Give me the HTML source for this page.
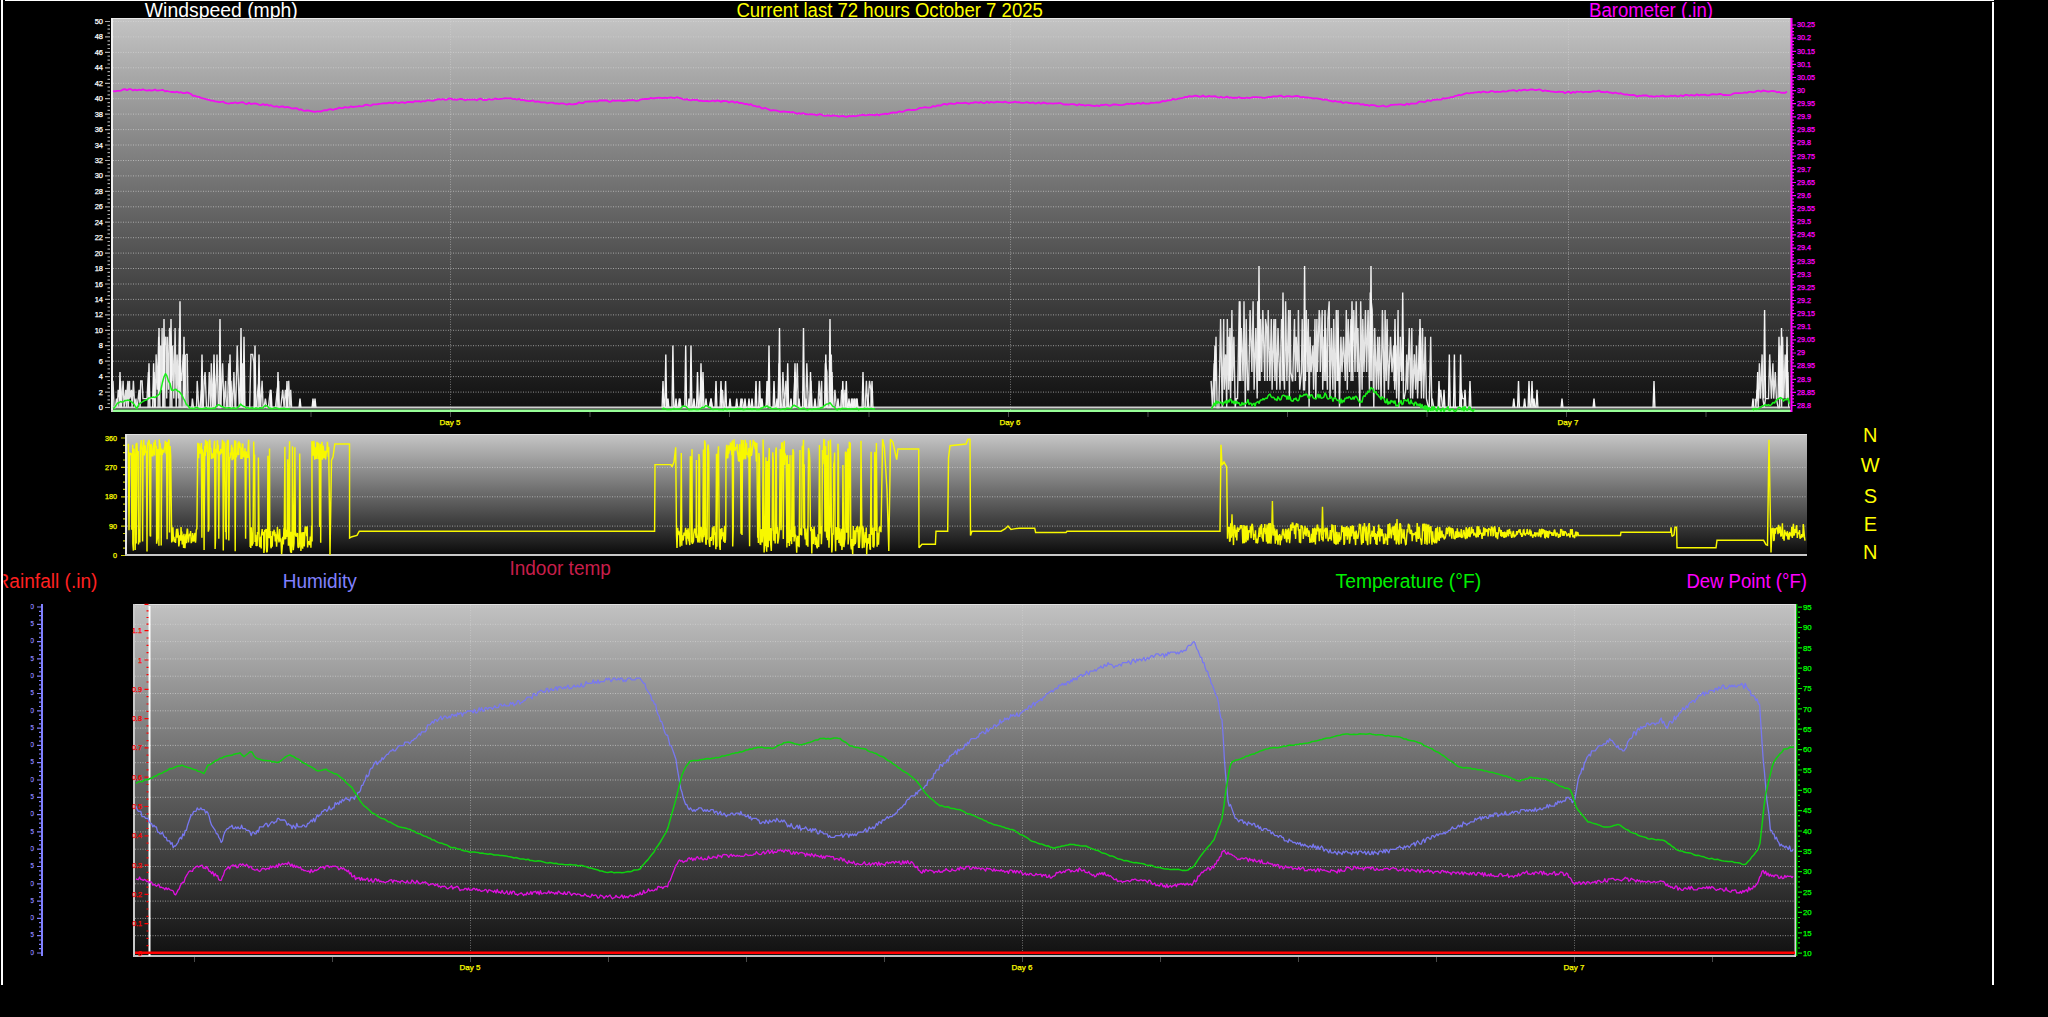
<!DOCTYPE html>
<html><head><meta charset="utf-8"><title>Weather 72h</title>
<style>html,body{margin:0;padding:0;background:#000;overflow:hidden;width:2048px;height:1017px}svg{display:block}text{font-family:"Liberation Sans",sans-serif}</style>
</head><body><svg width="2048" height="1017" viewBox="0 0 2048 1017" font-family='"Liberation Sans", sans-serif'><defs>
<linearGradient id="g1" x1="0" y1="0" x2="0" y2="1"><stop offset="0" stop-color="#c4c4c4"/><stop offset="0.5" stop-color="#636363"/><stop offset="1" stop-color="#0e0e0e"/></linearGradient>
<linearGradient id="g2" x1="0" y1="0" x2="0" y2="1"><stop offset="0" stop-color="#c6c6c6"/><stop offset="0.5" stop-color="#686868"/><stop offset="0.85" stop-color="#262626"/><stop offset="1" stop-color="#080808"/></linearGradient>
<linearGradient id="g3" x1="0" y1="0" x2="0" y2="1"><stop offset="0" stop-color="#c2c2c2"/><stop offset="0.5" stop-color="#636363"/><stop offset="1" stop-color="#101010"/></linearGradient>
</defs>
<rect x="111" y="18" width="1680" height="394" fill="url(#g1)"/>
<rect x="125" y="434" width="1682" height="122" fill="url(#g2)"/>
<rect x="133" y="604" width="1663" height="353" fill="url(#g3)"/>
<path d="M113 392.1H1791M113 376.6H1791M113 361.2H1791M113 345.7H1791M113 330.3H1791M113 314.9H1791M113 299.4H1791M113 284.0H1791M113 268.5H1791M113 253.1H1791M113 237.7H1791M113 222.2H1791M113 206.8H1791M113 191.3H1791M113 175.9H1791M113 160.5H1791M113 145.0H1791M113 129.6H1791M113 114.1H1791M113 98.7H1791M113 83.3H1791M113 67.8H1791M113 52.4H1791M113 36.9H1791M113 21.5H1791" stroke="#d8d8d8" stroke-opacity="0.62" stroke-width="1" stroke-dasharray="1 1.5" fill="none"/>
<path d="M450.5 19V412M1010.5 19V412M1568.5 19V412" stroke="#d8d8d8" stroke-opacity="0.45" stroke-width="1" stroke-dasharray="1 1.5" fill="none"/>
<path d="M127 526.1H1807M127 496.8H1807M127 467.4H1807" stroke="#d8d8d8" stroke-opacity="0.62" stroke-width="1" stroke-dasharray="1 1.5" fill="none"/>
<path d="M135 935.7H1796M135 918.4H1796M135 901.1H1796M135 883.8H1796M135 866.5H1796M135 849.2H1796M135 831.9H1796M135 814.6H1796M135 797.3H1796M135 780.0H1796M135 762.7H1796M135 745.4H1796M135 728.1H1796M135 710.8H1796M135 693.5H1796M135 676.2H1796M135 658.9H1796M135 641.6H1796M135 624.3H1796M135 607.0H1796" stroke="#d8d8d8" stroke-opacity="0.62" stroke-width="1" stroke-dasharray="1 1.5" fill="none"/>
<path d="M470.5 605V957M1022.5 605V957M1574.5 605V957" stroke="#d8d8d8" stroke-opacity="0.45" stroke-width="1" stroke-dasharray="1 1.5" fill="none"/>
<rect x="5" y="0" width="1989" height="1" fill="#fff"/>
<rect x="1" y="0" width="2" height="985" fill="#fff"/>
<rect x="1992" y="2" width="2" height="983" fill="#fff"/>
<rect x="111" y="18" width="1680" height="1" fill="#e8e8e8"/>
<rect x="111" y="18" width="2" height="394" fill="#f0f0f0"/>
<rect x="111" y="410" width="1680" height="2" fill="#d0d0d0"/>
<rect x="125" y="434" width="1682" height="1" fill="#e0e0e0"/>
<rect x="125" y="434" width="2" height="122" fill="#e8e8e8"/>
<rect x="125" y="554" width="1682" height="2" fill="#c8c8c8"/>
<rect x="133" y="604" width="1663" height="1" fill="#e0e0e0"/>
<rect x="133" y="604" width="2" height="353" fill="#c8c8c8"/>
<rect x="133" y="955" width="1663" height="2" fill="#c0c0c0"/>
<path d="M105.0 407.5H110.0M107.5 403.6H110.0M107.5 399.8H110.0M107.5 395.9H110.0M105.0 392.1H110.0M107.5 388.2H110.0M107.5 384.3H110.0M107.5 380.5H110.0M105.0 376.6H110.0M107.5 372.8H110.0M107.5 368.9H110.0M107.5 365.0H110.0M105.0 361.2H110.0M107.5 357.3H110.0M107.5 353.5H110.0M107.5 349.6H110.0M105.0 345.7H110.0M107.5 341.9H110.0M107.5 338.0H110.0M107.5 334.2H110.0M105.0 330.3H110.0M107.5 326.4H110.0M107.5 322.6H110.0M107.5 318.7H110.0M105.0 314.9H110.0M107.5 311.0H110.0M107.5 307.1H110.0M107.5 303.3H110.0M105.0 299.4H110.0M107.5 295.6H110.0M107.5 291.7H110.0M107.5 287.8H110.0M105.0 284.0H110.0M107.5 280.1H110.0M107.5 276.3H110.0M107.5 272.4H110.0M105.0 268.5H110.0M107.5 264.7H110.0M107.5 260.8H110.0M107.5 257.0H110.0M105.0 253.1H110.0M107.5 249.2H110.0M107.5 245.4H110.0M107.5 241.5H110.0M105.0 237.7H110.0M107.5 233.8H110.0M107.5 229.9H110.0M107.5 226.1H110.0M105.0 222.2H110.0M107.5 218.4H110.0M107.5 214.5H110.0M107.5 210.6H110.0M105.0 206.8H110.0M107.5 202.9H110.0M107.5 199.1H110.0M107.5 195.2H110.0M105.0 191.3H110.0M107.5 187.5H110.0M107.5 183.6H110.0M107.5 179.8H110.0M105.0 175.9H110.0M107.5 172.0H110.0M107.5 168.2H110.0M107.5 164.3H110.0M105.0 160.5H110.0M107.5 156.6H110.0M107.5 152.7H110.0M107.5 148.9H110.0M105.0 145.0H110.0M107.5 141.2H110.0M107.5 137.3H110.0M107.5 133.4H110.0M105.0 129.6H110.0M107.5 125.7H110.0M107.5 121.9H110.0M107.5 118.0H110.0M105.0 114.1H110.0M107.5 110.3H110.0M107.5 106.4H110.0M107.5 102.6H110.0M105.0 98.7H110.0M107.5 94.8H110.0M107.5 91.0H110.0M107.5 87.1H110.0M105.0 83.3H110.0M107.5 79.4H110.0M107.5 75.5H110.0M107.5 71.7H110.0M105.0 67.8H110.0M107.5 64.0H110.0M107.5 60.1H110.0M107.5 56.2H110.0M105.0 52.4H110.0M107.5 48.5H110.0M107.5 44.7H110.0M107.5 40.8H110.0M105.0 36.9H110.0M107.5 33.1H110.0M107.5 29.2H110.0M107.5 25.4H110.0M105.0 21.5H110.0" stroke="#a8a8a8" stroke-width="1.2" fill="none"/>
<text x="103.0" y="410.0" fill="#ffffff" stroke="#ffffff" stroke-width="0.25" font-size="7.5" text-anchor="end" >0</text>
<text x="103.0" y="394.6" fill="#ffffff" stroke="#ffffff" stroke-width="0.25" font-size="7.5" text-anchor="end" >2</text>
<text x="103.0" y="379.1" fill="#ffffff" stroke="#ffffff" stroke-width="0.25" font-size="7.5" text-anchor="end" >4</text>
<text x="103.0" y="363.7" fill="#ffffff" stroke="#ffffff" stroke-width="0.25" font-size="7.5" text-anchor="end" >6</text>
<text x="103.0" y="348.2" fill="#ffffff" stroke="#ffffff" stroke-width="0.25" font-size="7.5" text-anchor="end" >8</text>
<text x="103.0" y="332.8" fill="#ffffff" stroke="#ffffff" stroke-width="0.25" font-size="7.5" text-anchor="end" >10</text>
<text x="103.0" y="317.4" fill="#ffffff" stroke="#ffffff" stroke-width="0.25" font-size="7.5" text-anchor="end" >12</text>
<text x="103.0" y="301.9" fill="#ffffff" stroke="#ffffff" stroke-width="0.25" font-size="7.5" text-anchor="end" >14</text>
<text x="103.0" y="286.5" fill="#ffffff" stroke="#ffffff" stroke-width="0.25" font-size="7.5" text-anchor="end" >16</text>
<text x="103.0" y="271.0" fill="#ffffff" stroke="#ffffff" stroke-width="0.25" font-size="7.5" text-anchor="end" >18</text>
<text x="103.0" y="255.6" fill="#ffffff" stroke="#ffffff" stroke-width="0.25" font-size="7.5" text-anchor="end" >20</text>
<text x="103.0" y="240.2" fill="#ffffff" stroke="#ffffff" stroke-width="0.25" font-size="7.5" text-anchor="end" >22</text>
<text x="103.0" y="224.7" fill="#ffffff" stroke="#ffffff" stroke-width="0.25" font-size="7.5" text-anchor="end" >24</text>
<text x="103.0" y="209.3" fill="#ffffff" stroke="#ffffff" stroke-width="0.25" font-size="7.5" text-anchor="end" >26</text>
<text x="103.0" y="193.8" fill="#ffffff" stroke="#ffffff" stroke-width="0.25" font-size="7.5" text-anchor="end" >28</text>
<text x="103.0" y="178.4" fill="#ffffff" stroke="#ffffff" stroke-width="0.25" font-size="7.5" text-anchor="end" >30</text>
<text x="103.0" y="163.0" fill="#ffffff" stroke="#ffffff" stroke-width="0.25" font-size="7.5" text-anchor="end" >32</text>
<text x="103.0" y="147.5" fill="#ffffff" stroke="#ffffff" stroke-width="0.25" font-size="7.5" text-anchor="end" >34</text>
<text x="103.0" y="132.1" fill="#ffffff" stroke="#ffffff" stroke-width="0.25" font-size="7.5" text-anchor="end" >36</text>
<text x="103.0" y="116.6" fill="#ffffff" stroke="#ffffff" stroke-width="0.25" font-size="7.5" text-anchor="end" >38</text>
<text x="103.0" y="101.2" fill="#ffffff" stroke="#ffffff" stroke-width="0.25" font-size="7.5" text-anchor="end" >40</text>
<text x="103.0" y="85.8" fill="#ffffff" stroke="#ffffff" stroke-width="0.25" font-size="7.5" text-anchor="end" >42</text>
<text x="103.0" y="70.3" fill="#ffffff" stroke="#ffffff" stroke-width="0.25" font-size="7.5" text-anchor="end" >44</text>
<text x="103.0" y="54.9" fill="#ffffff" stroke="#ffffff" stroke-width="0.25" font-size="7.5" text-anchor="end" >46</text>
<text x="103.0" y="39.4" fill="#ffffff" stroke="#ffffff" stroke-width="0.25" font-size="7.5" text-anchor="end" >48</text>
<text x="103.0" y="24.0" fill="#ffffff" stroke="#ffffff" stroke-width="0.25" font-size="7.5" text-anchor="end" >50</text>
<rect x="1790.5" y="18" width="2" height="394" fill="#ff00ff"/>
<path d="M1792.0 405.5H1796.0M1792.0 402.2H1794.0M1792.0 398.9H1794.0M1792.0 395.7H1794.0M1792.0 392.4H1796.0M1792.0 389.1H1794.0M1792.0 385.8H1794.0M1792.0 382.5H1794.0M1792.0 379.3H1796.0M1792.0 376.0H1794.0M1792.0 372.7H1794.0M1792.0 369.4H1794.0M1792.0 366.1H1796.0M1792.0 362.9H1794.0M1792.0 359.6H1794.0M1792.0 356.3H1794.0M1792.0 353.0H1796.0M1792.0 349.7H1794.0M1792.0 346.5H1794.0M1792.0 343.2H1794.0M1792.0 339.9H1796.0M1792.0 336.6H1794.0M1792.0 333.3H1794.0M1792.0 330.1H1794.0M1792.0 326.8H1796.0M1792.0 323.5H1794.0M1792.0 320.2H1794.0M1792.0 316.9H1794.0M1792.0 313.7H1796.0M1792.0 310.4H1794.0M1792.0 307.1H1794.0M1792.0 303.8H1794.0M1792.0 300.5H1796.0M1792.0 297.3H1794.0M1792.0 294.0H1794.0M1792.0 290.7H1794.0M1792.0 287.4H1796.0M1792.0 284.1H1794.0M1792.0 280.9H1794.0M1792.0 277.6H1794.0M1792.0 274.3H1796.0M1792.0 271.0H1794.0M1792.0 267.7H1794.0M1792.0 264.5H1794.0M1792.0 261.2H1796.0M1792.0 257.9H1794.0M1792.0 254.6H1794.0M1792.0 251.3H1794.0M1792.0 248.1H1796.0M1792.0 244.8H1794.0M1792.0 241.5H1794.0M1792.0 238.2H1794.0M1792.0 234.9H1796.0M1792.0 231.7H1794.0M1792.0 228.4H1794.0M1792.0 225.1H1794.0M1792.0 221.8H1796.0M1792.0 218.5H1794.0M1792.0 215.3H1794.0M1792.0 212.0H1794.0M1792.0 208.7H1796.0M1792.0 205.4H1794.0M1792.0 202.1H1794.0M1792.0 198.9H1794.0M1792.0 195.6H1796.0M1792.0 192.3H1794.0M1792.0 189.0H1794.0M1792.0 185.7H1794.0M1792.0 182.5H1796.0M1792.0 179.2H1794.0M1792.0 175.9H1794.0M1792.0 172.6H1794.0M1792.0 169.3H1796.0M1792.0 166.1H1794.0M1792.0 162.8H1794.0M1792.0 159.5H1794.0M1792.0 156.2H1796.0M1792.0 152.9H1794.0M1792.0 149.7H1794.0M1792.0 146.4H1794.0M1792.0 143.1H1796.0M1792.0 139.8H1794.0M1792.0 136.5H1794.0M1792.0 133.3H1794.0M1792.0 130.0H1796.0M1792.0 126.7H1794.0M1792.0 123.4H1794.0M1792.0 120.1H1794.0M1792.0 116.9H1796.0M1792.0 113.6H1794.0M1792.0 110.3H1794.0M1792.0 107.0H1794.0M1792.0 103.7H1796.0M1792.0 100.5H1794.0M1792.0 97.2H1794.0M1792.0 93.9H1794.0M1792.0 90.6H1796.0M1792.0 87.3H1794.0M1792.0 84.1H1794.0M1792.0 80.8H1794.0M1792.0 77.5H1796.0M1792.0 74.2H1794.0M1792.0 70.9H1794.0M1792.0 67.7H1794.0M1792.0 64.4H1796.0M1792.0 61.1H1794.0M1792.0 57.8H1794.0M1792.0 54.5H1794.0M1792.0 51.3H1796.0M1792.0 48.0H1794.0M1792.0 44.7H1794.0M1792.0 41.4H1794.0M1792.0 38.1H1796.0M1792.0 34.9H1794.0M1792.0 31.6H1794.0M1792.0 28.3H1794.0M1792.0 25.0H1796.0" stroke="#ff00ff" stroke-width="1.2" fill="none"/>
<text x="1797.0" y="407.8" fill="#ff00ff" stroke="#ff00ff" stroke-width="0.25" font-size="7.2" text-anchor="start" >28.8</text>
<text x="1797.0" y="394.7" fill="#ff00ff" stroke="#ff00ff" stroke-width="0.25" font-size="7.2" text-anchor="start" >28.85</text>
<text x="1797.0" y="381.6" fill="#ff00ff" stroke="#ff00ff" stroke-width="0.25" font-size="7.2" text-anchor="start" >28.9</text>
<text x="1797.0" y="368.4" fill="#ff00ff" stroke="#ff00ff" stroke-width="0.25" font-size="7.2" text-anchor="start" >28.95</text>
<text x="1797.0" y="355.3" fill="#ff00ff" stroke="#ff00ff" stroke-width="0.25" font-size="7.2" text-anchor="start" >29</text>
<text x="1797.0" y="342.2" fill="#ff00ff" stroke="#ff00ff" stroke-width="0.25" font-size="7.2" text-anchor="start" >29.05</text>
<text x="1797.0" y="329.1" fill="#ff00ff" stroke="#ff00ff" stroke-width="0.25" font-size="7.2" text-anchor="start" >29.1</text>
<text x="1797.0" y="316.0" fill="#ff00ff" stroke="#ff00ff" stroke-width="0.25" font-size="7.2" text-anchor="start" >29.15</text>
<text x="1797.0" y="302.8" fill="#ff00ff" stroke="#ff00ff" stroke-width="0.25" font-size="7.2" text-anchor="start" >29.2</text>
<text x="1797.0" y="289.7" fill="#ff00ff" stroke="#ff00ff" stroke-width="0.25" font-size="7.2" text-anchor="start" >29.25</text>
<text x="1797.0" y="276.6" fill="#ff00ff" stroke="#ff00ff" stroke-width="0.25" font-size="7.2" text-anchor="start" >29.3</text>
<text x="1797.0" y="263.5" fill="#ff00ff" stroke="#ff00ff" stroke-width="0.25" font-size="7.2" text-anchor="start" >29.35</text>
<text x="1797.0" y="250.4" fill="#ff00ff" stroke="#ff00ff" stroke-width="0.25" font-size="7.2" text-anchor="start" >29.4</text>
<text x="1797.0" y="237.2" fill="#ff00ff" stroke="#ff00ff" stroke-width="0.25" font-size="7.2" text-anchor="start" >29.45</text>
<text x="1797.0" y="224.1" fill="#ff00ff" stroke="#ff00ff" stroke-width="0.25" font-size="7.2" text-anchor="start" >29.5</text>
<text x="1797.0" y="211.0" fill="#ff00ff" stroke="#ff00ff" stroke-width="0.25" font-size="7.2" text-anchor="start" >29.55</text>
<text x="1797.0" y="197.9" fill="#ff00ff" stroke="#ff00ff" stroke-width="0.25" font-size="7.2" text-anchor="start" >29.6</text>
<text x="1797.0" y="184.8" fill="#ff00ff" stroke="#ff00ff" stroke-width="0.25" font-size="7.2" text-anchor="start" >29.65</text>
<text x="1797.0" y="171.6" fill="#ff00ff" stroke="#ff00ff" stroke-width="0.25" font-size="7.2" text-anchor="start" >29.7</text>
<text x="1797.0" y="158.5" fill="#ff00ff" stroke="#ff00ff" stroke-width="0.25" font-size="7.2" text-anchor="start" >29.75</text>
<text x="1797.0" y="145.4" fill="#ff00ff" stroke="#ff00ff" stroke-width="0.25" font-size="7.2" text-anchor="start" >29.8</text>
<text x="1797.0" y="132.3" fill="#ff00ff" stroke="#ff00ff" stroke-width="0.25" font-size="7.2" text-anchor="start" >29.85</text>
<text x="1797.0" y="119.2" fill="#ff00ff" stroke="#ff00ff" stroke-width="0.25" font-size="7.2" text-anchor="start" >29.9</text>
<text x="1797.0" y="106.0" fill="#ff00ff" stroke="#ff00ff" stroke-width="0.25" font-size="7.2" text-anchor="start" >29.95</text>
<text x="1797.0" y="92.9" fill="#ff00ff" stroke="#ff00ff" stroke-width="0.25" font-size="7.2" text-anchor="start" >30</text>
<text x="1797.0" y="79.8" fill="#ff00ff" stroke="#ff00ff" stroke-width="0.25" font-size="7.2" text-anchor="start" >30.05</text>
<text x="1797.0" y="66.7" fill="#ff00ff" stroke="#ff00ff" stroke-width="0.25" font-size="7.2" text-anchor="start" >30.1</text>
<text x="1797.0" y="53.6" fill="#ff00ff" stroke="#ff00ff" stroke-width="0.25" font-size="7.2" text-anchor="start" >30.15</text>
<text x="1797.0" y="40.4" fill="#ff00ff" stroke="#ff00ff" stroke-width="0.25" font-size="7.2" text-anchor="start" >30.2</text>
<text x="1797.0" y="27.3" fill="#ff00ff" stroke="#ff00ff" stroke-width="0.25" font-size="7.2" text-anchor="start" >30.25</text>
<path d="M121.0 555.5H125.0M123.0 548.2H125.0M123.0 540.8H125.0M123.0 533.5H125.0M121.0 526.1H125.0M123.0 518.8H125.0M123.0 511.4H125.0M123.0 504.1H125.0M121.0 496.8H125.0M123.0 489.4H125.0M123.0 482.1H125.0M123.0 474.7H125.0M121.0 467.4H125.0M123.0 460.0H125.0M123.0 452.7H125.0M123.0 445.3H125.0M121.0 438.0H125.0" stroke="#c8c800" stroke-width="1.2" fill="none"/>
<text x="117.0" y="558.0" fill="#ffff00" stroke="#ffff00" stroke-width="0.25" font-size="7.2" text-anchor="end" >0</text>
<text x="117.0" y="528.6" fill="#ffff00" stroke="#ffff00" stroke-width="0.25" font-size="7.2" text-anchor="end" >90</text>
<text x="117.0" y="499.2" fill="#ffff00" stroke="#ffff00" stroke-width="0.25" font-size="7.2" text-anchor="end" >180</text>
<text x="117.0" y="469.9" fill="#ffff00" stroke="#ffff00" stroke-width="0.25" font-size="7.2" text-anchor="end" >270</text>
<text x="117.0" y="440.5" fill="#ffff00" stroke="#ffff00" stroke-width="0.25" font-size="7.2" text-anchor="end" >360</text>
<rect x="41" y="604" width="2" height="352" fill="#8080ff"/>
<path d="M37.0 953.0H41.0M39.0 948.7H41.0M39.0 944.4H41.0M39.0 940.0H41.0M37.0 935.7H41.0M39.0 931.4H41.0M39.0 927.0H41.0M39.0 922.7H41.0M37.0 918.4H41.0M39.0 914.1H41.0M39.0 909.8H41.0M39.0 905.4H41.0M37.0 901.1H41.0M39.0 896.8H41.0M39.0 892.5H41.0M39.0 888.1H41.0M37.0 883.8H41.0M39.0 879.5H41.0M39.0 875.1H41.0M39.0 870.8H41.0M37.0 866.5H41.0M39.0 862.2H41.0M39.0 857.9H41.0M39.0 853.5H41.0M37.0 849.2H41.0M39.0 844.9H41.0M39.0 840.5H41.0M39.0 836.2H41.0M37.0 831.9H41.0M39.0 827.6H41.0M39.0 823.2H41.0M39.0 818.9H41.0M37.0 814.6H41.0M39.0 810.3H41.0M39.0 806.0H41.0M39.0 801.6H41.0M37.0 797.3H41.0M39.0 793.0H41.0M39.0 788.6H41.0M39.0 784.3H41.0M37.0 780.0H41.0M39.0 775.7H41.0M39.0 771.4H41.0M39.0 767.0H41.0M37.0 762.7H41.0M39.0 758.4H41.0M39.0 754.0H41.0M39.0 749.7H41.0M37.0 745.4H41.0M39.0 741.1H41.0M39.0 736.8H41.0M39.0 732.4H41.0M37.0 728.1H41.0M39.0 723.8H41.0M39.0 719.5H41.0M39.0 715.1H41.0M37.0 710.8H41.0M39.0 706.5H41.0M39.0 702.1H41.0M39.0 697.8H41.0M37.0 693.5H41.0M39.0 689.2H41.0M39.0 684.9H41.0M39.0 680.5H41.0M37.0 676.2H41.0M39.0 671.9H41.0M39.0 667.5H41.0M39.0 663.2H41.0M37.0 658.9H41.0M39.0 654.6H41.0M39.0 650.2H41.0M39.0 645.9H41.0M37.0 641.6H41.0M39.0 637.3H41.0M39.0 633.0H41.0M39.0 628.6H41.0M37.0 624.3H41.0M39.0 620.0H41.0M39.0 615.6H41.0M39.0 611.3H41.0M37.0 607.0H41.0" stroke="#8080ff" stroke-width="1.2" fill="none"/>
<clipPath id="hc"><rect x="30.6" y="590" width="20" height="380"/></clipPath><g clip-path="url(#hc)">
<text x="34.0" y="954.7" fill="#8080ff" stroke="#8080ff" stroke-width="0.25" font-size="7.2" text-anchor="end" >0</text>
<text x="34.0" y="937.4" fill="#8080ff" stroke="#8080ff" stroke-width="0.25" font-size="7.2" text-anchor="end" >5</text>
<text x="34.0" y="920.1" fill="#8080ff" stroke="#8080ff" stroke-width="0.25" font-size="7.2" text-anchor="end" >0</text>
<text x="34.0" y="902.8" fill="#8080ff" stroke="#8080ff" stroke-width="0.25" font-size="7.2" text-anchor="end" >5</text>
<text x="34.0" y="885.5" fill="#8080ff" stroke="#8080ff" stroke-width="0.25" font-size="7.2" text-anchor="end" >0</text>
<text x="34.0" y="868.2" fill="#8080ff" stroke="#8080ff" stroke-width="0.25" font-size="7.2" text-anchor="end" >5</text>
<text x="34.0" y="850.9" fill="#8080ff" stroke="#8080ff" stroke-width="0.25" font-size="7.2" text-anchor="end" >0</text>
<text x="34.0" y="833.6" fill="#8080ff" stroke="#8080ff" stroke-width="0.25" font-size="7.2" text-anchor="end" >5</text>
<text x="34.0" y="816.3" fill="#8080ff" stroke="#8080ff" stroke-width="0.25" font-size="7.2" text-anchor="end" >0</text>
<text x="34.0" y="799.0" fill="#8080ff" stroke="#8080ff" stroke-width="0.25" font-size="7.2" text-anchor="end" >5</text>
<text x="34.0" y="781.7" fill="#8080ff" stroke="#8080ff" stroke-width="0.25" font-size="7.2" text-anchor="end" >0</text>
<text x="34.0" y="764.4" fill="#8080ff" stroke="#8080ff" stroke-width="0.25" font-size="7.2" text-anchor="end" >5</text>
<text x="34.0" y="747.1" fill="#8080ff" stroke="#8080ff" stroke-width="0.25" font-size="7.2" text-anchor="end" >0</text>
<text x="34.0" y="729.8" fill="#8080ff" stroke="#8080ff" stroke-width="0.25" font-size="7.2" text-anchor="end" >5</text>
<text x="34.0" y="712.5" fill="#8080ff" stroke="#8080ff" stroke-width="0.25" font-size="7.2" text-anchor="end" >0</text>
<text x="34.0" y="695.2" fill="#8080ff" stroke="#8080ff" stroke-width="0.25" font-size="7.2" text-anchor="end" >5</text>
<text x="34.0" y="677.9" fill="#8080ff" stroke="#8080ff" stroke-width="0.25" font-size="7.2" text-anchor="end" >0</text>
<text x="34.0" y="660.6" fill="#8080ff" stroke="#8080ff" stroke-width="0.25" font-size="7.2" text-anchor="end" >5</text>
<text x="34.0" y="643.3" fill="#8080ff" stroke="#8080ff" stroke-width="0.25" font-size="7.2" text-anchor="end" >0</text>
<text x="34.0" y="626.0" fill="#8080ff" stroke="#8080ff" stroke-width="0.25" font-size="7.2" text-anchor="end" >5</text>
<text x="34.0" y="608.7" fill="#8080ff" stroke="#8080ff" stroke-width="0.25" font-size="7.2" text-anchor="end" >0</text>
</g>
<rect x="148.5" y="606" width="2" height="350" fill="#ffffff"/>
<path d="M144.5 953.0H148.5M146.5 945.7H148.5M146.5 938.4H148.5M146.5 931.0H148.5M144.5 923.7H148.5M146.5 916.4H148.5M146.5 909.0H148.5M146.5 901.7H148.5M144.5 894.4H148.5M146.5 887.1H148.5M146.5 879.8H148.5M146.5 872.4H148.5M144.5 865.1H148.5M146.5 857.8H148.5M146.5 850.5H148.5M146.5 843.1H148.5M144.5 835.8H148.5M146.5 828.5H148.5M146.5 821.1H148.5M146.5 813.8H148.5M144.5 806.5H148.5M146.5 799.2H148.5M146.5 791.9H148.5M146.5 784.5H148.5M144.5 777.2H148.5M146.5 769.9H148.5M146.5 762.5H148.5M146.5 755.2H148.5M144.5 747.9H148.5M146.5 740.6H148.5M146.5 733.2H148.5M146.5 725.9H148.5M144.5 718.6H148.5M146.5 711.3H148.5M146.5 704.0H148.5M146.5 696.6H148.5M144.5 689.3H148.5M146.5 682.0H148.5M146.5 674.6H148.5M146.5 667.3H148.5M144.5 660.0H148.5M146.5 652.7H148.5M146.5 645.4H148.5M146.5 638.0H148.5M144.5 630.7H148.5M146.5 624.1H148.5M146.5 617.5H148.5M146.5 610.9H148.5M144.5 604.3H148.5" stroke="#ff0000" stroke-width="1.2" fill="none"/>
<text x="142.0" y="955.5" fill="#ff0000" stroke="#ff0000" stroke-width="0.25" font-size="7.2" text-anchor="end" >0</text>
<text x="142.0" y="926.2" fill="#ff0000" stroke="#ff0000" stroke-width="0.25" font-size="7.2" text-anchor="end" >0.1</text>
<text x="142.0" y="896.9" fill="#ff0000" stroke="#ff0000" stroke-width="0.25" font-size="7.2" text-anchor="end" >0.2</text>
<text x="142.0" y="867.6" fill="#ff0000" stroke="#ff0000" stroke-width="0.25" font-size="7.2" text-anchor="end" >0.3</text>
<text x="142.0" y="838.3" fill="#ff0000" stroke="#ff0000" stroke-width="0.25" font-size="7.2" text-anchor="end" >0.4</text>
<text x="142.0" y="809.0" fill="#ff0000" stroke="#ff0000" stroke-width="0.25" font-size="7.2" text-anchor="end" >0.5</text>
<text x="142.0" y="779.7" fill="#ff0000" stroke="#ff0000" stroke-width="0.25" font-size="7.2" text-anchor="end" >0.6</text>
<text x="142.0" y="750.4" fill="#ff0000" stroke="#ff0000" stroke-width="0.25" font-size="7.2" text-anchor="end" >0.7</text>
<text x="142.0" y="721.1" fill="#ff0000" stroke="#ff0000" stroke-width="0.25" font-size="7.2" text-anchor="end" >0.8</text>
<text x="142.0" y="691.8" fill="#ff0000" stroke="#ff0000" stroke-width="0.25" font-size="7.2" text-anchor="end" >0.9</text>
<text x="142.0" y="662.5" fill="#ff0000" stroke="#ff0000" stroke-width="0.25" font-size="7.2" text-anchor="end" >1</text>
<text x="142.0" y="633.2" fill="#ff0000" stroke="#ff0000" stroke-width="0.25" font-size="7.2" text-anchor="end" >1.1</text>
<rect x="1794.5" y="604" width="1.5" height="353" fill="#d8d8d8"/><rect x="1796" y="604" width="1.3" height="352" fill="#00d000"/>
<path d="M1798.0 953.1H1802.0M1798.0 948.0H1800.0M1798.0 942.9H1800.0M1798.0 937.8H1800.0M1798.0 932.8H1802.0M1798.0 927.7H1800.0M1798.0 922.6H1800.0M1798.0 917.5H1800.0M1798.0 912.4H1802.0M1798.0 907.3H1800.0M1798.0 902.2H1800.0M1798.0 897.1H1800.0M1798.0 892.1H1802.0M1798.0 887.0H1800.0M1798.0 881.9H1800.0M1798.0 876.8H1800.0M1798.0 871.7H1802.0M1798.0 866.6H1800.0M1798.0 861.5H1800.0M1798.0 856.4H1800.0M1798.0 851.4H1802.0M1798.0 846.3H1800.0M1798.0 841.2H1800.0M1798.0 836.1H1800.0M1798.0 831.0H1802.0M1798.0 825.9H1800.0M1798.0 820.8H1800.0M1798.0 815.7H1800.0M1798.0 810.6H1802.0M1798.0 805.6H1800.0M1798.0 800.5H1800.0M1798.0 795.4H1800.0M1798.0 790.3H1802.0M1798.0 785.2H1800.0M1798.0 780.1H1800.0M1798.0 775.0H1800.0M1798.0 770.0H1802.0M1798.0 764.9H1800.0M1798.0 759.8H1800.0M1798.0 754.7H1800.0M1798.0 749.6H1802.0M1798.0 744.5H1800.0M1798.0 739.4H1800.0M1798.0 734.3H1800.0M1798.0 729.2H1802.0M1798.0 724.2H1800.0M1798.0 719.1H1800.0M1798.0 714.0H1800.0M1798.0 708.9H1802.0M1798.0 703.8H1800.0M1798.0 698.7H1800.0M1798.0 693.6H1800.0M1798.0 688.5H1802.0M1798.0 683.5H1800.0M1798.0 678.4H1800.0M1798.0 673.3H1800.0M1798.0 668.2H1802.0M1798.0 663.1H1800.0M1798.0 658.0H1800.0M1798.0 652.9H1800.0M1798.0 647.9H1802.0M1798.0 642.8H1800.0M1798.0 637.7H1800.0M1798.0 632.6H1800.0M1798.0 627.5H1802.0M1798.0 622.4H1800.0M1798.0 617.3H1800.0M1798.0 612.2H1800.0M1798.0 607.1H1802.0" stroke="#00e000" stroke-width="1.2" fill="none"/>
<text x="1803.0" y="955.8" fill="#00ff00" stroke="#00ff00" stroke-width="0.25" font-size="7.8" text-anchor="start" >10</text>
<text x="1803.0" y="935.5" fill="#00ff00" stroke="#00ff00" stroke-width="0.25" font-size="7.8" text-anchor="start" >15</text>
<text x="1803.0" y="915.1" fill="#00ff00" stroke="#00ff00" stroke-width="0.25" font-size="7.8" text-anchor="start" >20</text>
<text x="1803.0" y="894.8" fill="#00ff00" stroke="#00ff00" stroke-width="0.25" font-size="7.8" text-anchor="start" >25</text>
<text x="1803.0" y="874.4" fill="#00ff00" stroke="#00ff00" stroke-width="0.25" font-size="7.8" text-anchor="start" >30</text>
<text x="1803.0" y="854.1" fill="#00ff00" stroke="#00ff00" stroke-width="0.25" font-size="7.8" text-anchor="start" >35</text>
<text x="1803.0" y="833.7" fill="#00ff00" stroke="#00ff00" stroke-width="0.25" font-size="7.8" text-anchor="start" >40</text>
<text x="1803.0" y="813.4" fill="#00ff00" stroke="#00ff00" stroke-width="0.25" font-size="7.8" text-anchor="start" >45</text>
<text x="1803.0" y="793.0" fill="#00ff00" stroke="#00ff00" stroke-width="0.25" font-size="7.8" text-anchor="start" >50</text>
<text x="1803.0" y="772.7" fill="#00ff00" stroke="#00ff00" stroke-width="0.25" font-size="7.8" text-anchor="start" >55</text>
<text x="1803.0" y="752.3" fill="#00ff00" stroke="#00ff00" stroke-width="0.25" font-size="7.8" text-anchor="start" >60</text>
<text x="1803.0" y="732.0" fill="#00ff00" stroke="#00ff00" stroke-width="0.25" font-size="7.8" text-anchor="start" >65</text>
<text x="1803.0" y="711.6" fill="#00ff00" stroke="#00ff00" stroke-width="0.25" font-size="7.8" text-anchor="start" >70</text>
<text x="1803.0" y="691.2" fill="#00ff00" stroke="#00ff00" stroke-width="0.25" font-size="7.8" text-anchor="start" >75</text>
<text x="1803.0" y="670.9" fill="#00ff00" stroke="#00ff00" stroke-width="0.25" font-size="7.8" text-anchor="start" >80</text>
<text x="1803.0" y="650.6" fill="#00ff00" stroke="#00ff00" stroke-width="0.25" font-size="7.8" text-anchor="start" >85</text>
<text x="1803.0" y="630.2" fill="#00ff00" stroke="#00ff00" stroke-width="0.25" font-size="7.8" text-anchor="start" >90</text>
<text x="1803.0" y="609.9" fill="#00ff00" stroke="#00ff00" stroke-width="0.25" font-size="7.8" text-anchor="start" >95</text>
<text x="450.0" y="425.0" fill="#ffff00" stroke="#ffff00" stroke-width="0.25" font-size="8.0" text-anchor="middle" >Day 5</text>
<text x="1010.0" y="425.0" fill="#ffff00" stroke="#ffff00" stroke-width="0.25" font-size="8.0" text-anchor="middle" >Day 6</text>
<text x="1568.0" y="425.0" fill="#ffff00" stroke="#ffff00" stroke-width="0.25" font-size="8.0" text-anchor="middle" >Day 7</text>
<text x="470.0" y="970.0" fill="#ffff00" stroke="#ffff00" stroke-width="0.25" font-size="8.0" text-anchor="middle" >Day 5</text>
<text x="1022.0" y="970.0" fill="#ffff00" stroke="#ffff00" stroke-width="0.25" font-size="8.0" text-anchor="middle" >Day 6</text>
<text x="1574.0" y="970.0" fill="#ffff00" stroke="#ffff00" stroke-width="0.25" font-size="8.0" text-anchor="middle" >Day 7</text>
<path d="M194.5 957V962M332.5 957V962M470.5 957V962M608.5 957V962M746.5 957V962M884.5 957V962M1022.5 957V962M1160.5 957V962M1298.5 957V962M1436.5 957V962M1574.5 957V962M1712.5 957V962M311.0 412V417M450.5 412V417M590.0 412V417M729.5 412V417M869.0 412V417M1008.5 412V417M1148.0 412V417M1287.5 412V417M1427.0 412V417M1566.5 412V417M1706.0 412V417" stroke="#484848" stroke-width="1" fill="none"/>
<path d="M113.0 91.1L115.0 91.3L117.0 90.8L119.0 90.9L121.0 90.6L123.0 89.5L125.0 89.1L127.0 90.2L129.0 89.1L131.0 89.2L133.0 90.4L135.0 89.6L137.0 90.3L139.0 89.7L141.0 90.1L143.0 89.3L145.0 90.2L147.0 90.6L149.0 90.1L151.0 90.5L153.0 90.4L155.0 89.5L157.0 90.7L159.0 90.4L161.0 90.2L163.0 89.9L165.0 91.4L167.0 91.0L169.0 91.5L171.0 92.0L173.0 91.9L175.0 92.4L177.0 91.7L179.0 92.6L181.0 92.2L183.0 93.1L185.0 93.2L187.0 92.4L189.0 93.2L191.0 94.0L193.0 95.9L195.0 95.7L197.0 96.7L199.0 96.9L201.0 97.9L203.0 98.4L205.0 98.8L207.0 99.5L209.0 99.9L211.0 100.7L213.0 100.7L215.0 101.4L217.0 101.6L219.0 102.1L221.0 102.0L223.0 101.5L225.0 102.9L227.0 103.4L229.0 103.6L231.0 103.0L233.0 103.2L235.0 102.3L237.0 103.3L239.0 102.8L241.0 102.3L243.0 102.1L245.0 103.6L247.0 104.0L249.0 102.7L251.0 104.1L253.0 103.6L255.0 103.4L257.0 103.8L259.0 104.8L261.0 105.1L263.0 104.0L265.0 105.1L267.0 104.4L269.0 105.7L271.0 105.2L273.0 106.3L275.0 106.7L277.0 106.2L279.0 107.3L281.0 106.5L283.0 106.4L285.0 107.5L287.0 106.9L289.0 107.4L291.0 108.1L293.0 108.7L295.0 108.2L297.0 108.3L299.0 109.9L301.0 109.3L303.0 110.6L305.0 110.8L307.0 110.3L309.0 110.7L311.0 111.1L313.0 111.5L315.0 111.8L317.0 111.4L319.0 111.3L321.0 111.5L323.0 110.6L325.0 110.2L327.0 110.4L329.0 109.3L331.0 109.2L333.0 110.0L335.0 109.0L337.0 108.8L339.0 107.7L341.0 108.1L343.0 108.1L345.0 107.0L347.0 107.7L349.0 107.5L351.0 106.4L353.0 107.1L355.0 106.6L357.0 106.7L359.0 106.0L361.0 106.4L363.0 106.2L365.0 104.8L367.0 104.7L369.0 105.4L371.0 105.7L373.0 104.3L375.0 104.4L377.0 104.4L379.0 103.8L381.0 103.6L383.0 103.3L385.0 103.2L387.0 103.4L389.0 102.7L391.0 102.8L393.0 103.3L395.0 102.1L397.0 102.9L399.0 103.1L401.0 102.4L403.0 102.2L405.0 103.1L407.0 102.0L409.0 101.8L411.0 102.0L413.0 102.3L415.0 101.1L417.0 101.3L419.0 101.2L421.0 101.8L423.0 101.0L425.0 101.5L427.0 100.3L429.0 100.4L431.0 100.7L433.0 100.9L435.0 100.1L437.0 99.5L439.0 99.2L441.0 99.7L443.0 99.0L445.0 99.8L447.0 99.7L449.0 98.5L451.0 98.6L453.0 99.6L455.0 99.5L457.0 99.8L459.0 99.2L461.0 99.0L463.0 99.4L465.0 100.3L467.0 99.6L469.0 99.7L471.0 99.7L473.0 99.6L475.0 99.5L477.0 100.3L479.0 99.0L481.0 98.6L483.0 100.1L485.0 99.9L487.0 100.0L489.0 99.0L491.0 99.7L493.0 99.6L495.0 98.4L497.0 99.2L499.0 99.2L501.0 98.9L503.0 98.6L505.0 98.2L507.0 98.4L509.0 98.4L511.0 98.2L513.0 99.2L515.0 98.8L517.0 99.8L519.0 98.7L521.0 100.2L523.0 99.9L525.0 100.5L527.0 100.8L529.0 101.1L531.0 101.0L533.0 100.4L535.0 101.9L537.0 101.3L539.0 101.6L541.0 102.4L543.0 102.3L545.0 102.3L547.0 103.3L549.0 102.9L551.0 102.6L553.0 102.6L555.0 103.7L557.0 103.3L559.0 103.9L561.0 103.4L563.0 103.3L565.0 104.0L567.0 104.6L569.0 103.7L571.0 104.4L573.0 104.4L575.0 104.0L577.0 103.8L579.0 102.3L581.0 103.0L583.0 103.2L585.0 101.6L587.0 101.7L589.0 101.5L591.0 101.7L593.0 101.3L595.0 101.2L597.0 101.7L599.0 100.4L601.0 100.5L603.0 100.5L605.0 100.5L607.0 100.4L609.0 101.8L611.0 101.6L613.0 100.3L615.0 100.9L617.0 100.6L619.0 100.6L621.0 100.6L623.0 101.0L625.0 100.9L627.0 100.5L629.0 100.2L631.0 100.4L633.0 100.0L635.0 100.7L637.0 100.9L639.0 100.3L641.0 99.4L643.0 99.2L645.0 99.0L647.0 99.0L649.0 98.9L651.0 97.8L653.0 98.5L655.0 98.1L657.0 97.8L659.0 97.7L661.0 97.9L663.0 98.2L665.0 97.7L667.0 98.1L669.0 97.7L671.0 97.4L673.0 97.8L675.0 98.0L677.0 97.2L679.0 98.0L681.0 98.3L683.0 99.3L685.0 99.7L687.0 99.1L689.0 100.2L691.0 100.3L693.0 99.7L695.0 100.1L697.0 99.7L699.0 100.9L701.0 100.7L703.0 101.2L705.0 101.1L707.0 101.0L709.0 101.3L711.0 101.1L713.0 100.5L715.0 101.3L717.0 100.5L719.0 100.8L721.0 101.9L723.0 100.9L725.0 101.1L727.0 101.2L729.0 102.5L731.0 101.5L733.0 101.4L735.0 102.8L737.0 101.7L739.0 103.0L741.0 102.8L743.0 103.4L745.0 104.1L747.0 104.0L749.0 104.9L751.0 104.2L753.0 105.8L755.0 105.9L757.0 106.8L759.0 106.3L761.0 107.9L763.0 108.7L765.0 107.8L767.0 108.7L769.0 109.6L771.0 110.6L773.0 110.1L775.0 110.4L777.0 110.7L779.0 111.5L781.0 111.9L783.0 111.5L785.0 111.6L787.0 111.9L789.0 112.0L791.0 112.3L793.0 112.0L795.0 112.8L797.0 113.8L799.0 113.1L801.0 113.8L803.0 113.0L805.0 114.0L807.0 114.3L809.0 114.3L811.0 114.2L813.0 114.3L815.0 114.7L817.0 115.3L819.0 114.2L821.0 114.3L823.0 115.5L825.0 116.0L827.0 115.5L829.0 115.5L831.0 116.1L833.0 115.4L835.0 115.7L837.0 115.8L839.0 116.6L841.0 116.2L843.0 115.9L845.0 116.6L847.0 116.9L849.0 115.8L851.0 116.4L853.0 115.8L855.0 116.4L857.0 115.9L859.0 115.3L861.0 115.1L863.0 114.7L865.0 115.4L867.0 115.1L869.0 114.7L871.0 114.9L873.0 114.8L875.0 115.4L877.0 114.3L879.0 115.4L881.0 114.3L883.0 114.2L885.0 113.7L887.0 114.0L889.0 113.6L891.0 112.9L893.0 112.5L895.0 112.6L897.0 112.5L899.0 111.5L901.0 111.7L903.0 111.8L905.0 110.7L907.0 110.0L909.0 109.7L911.0 110.2L913.0 109.8L915.0 110.0L917.0 109.5L919.0 108.2L921.0 107.8L923.0 107.6L925.0 107.2L927.0 107.7L929.0 107.6L931.0 107.4L933.0 106.0L935.0 106.7L937.0 105.5L939.0 105.4L941.0 105.6L943.0 104.2L945.0 103.9L947.0 104.8L949.0 103.6L951.0 103.5L953.0 103.8L955.0 103.9L957.0 102.7L959.0 103.2L961.0 103.2L963.0 103.2L965.0 102.7L967.0 103.2L969.0 103.8L971.0 102.8L973.0 102.9L975.0 102.2L977.0 102.3L979.0 102.9L981.0 101.9L983.0 103.1L985.0 103.0L987.0 101.6L989.0 102.9L991.0 101.9L993.0 102.5L995.0 102.4L997.0 101.6L999.0 102.1L1001.0 102.1L1003.0 102.4L1005.0 101.6L1007.0 102.4L1009.0 102.8L1011.0 102.4L1013.0 102.3L1015.0 101.7L1017.0 102.3L1019.0 102.2L1021.0 102.8L1023.0 102.8L1025.0 102.7L1027.0 102.1L1029.0 102.9L1031.0 103.0L1033.0 102.3L1035.0 103.5L1037.0 103.2L1039.0 102.4L1041.0 103.7L1043.0 102.5L1045.0 102.9L1047.0 103.6L1049.0 103.4L1051.0 103.4L1053.0 103.6L1055.0 103.4L1057.0 103.3L1059.0 103.2L1061.0 103.2L1063.0 104.3L1065.0 104.5L1067.0 104.3L1069.0 104.7L1071.0 104.2L1073.0 104.2L1075.0 104.5L1077.0 105.4L1079.0 104.2L1081.0 105.0L1083.0 104.8L1085.0 105.7L1087.0 105.2L1089.0 105.2L1091.0 105.5L1093.0 105.8L1095.0 106.2L1097.0 105.4L1099.0 106.2L1101.0 104.9L1103.0 105.1L1105.0 104.7L1107.0 104.7L1109.0 105.6L1111.0 105.5L1113.0 104.5L1115.0 104.4L1117.0 104.7L1119.0 105.1L1121.0 105.1L1123.0 104.9L1125.0 104.5L1127.0 103.7L1129.0 104.0L1131.0 103.5L1133.0 103.9L1135.0 103.9L1137.0 103.2L1139.0 103.1L1141.0 103.9L1143.0 102.6L1145.0 103.7L1147.0 103.7L1149.0 103.7L1151.0 102.6L1153.0 102.8L1155.0 102.7L1157.0 102.5L1159.0 102.7L1161.0 101.9L1163.0 100.9L1165.0 101.5L1167.0 100.5L1169.0 100.4L1171.0 100.2L1173.0 98.7L1175.0 99.6L1177.0 99.1L1179.0 98.5L1181.0 98.2L1183.0 97.8L1185.0 97.0L1187.0 97.2L1189.0 96.1L1191.0 96.5L1193.0 96.3L1195.0 95.7L1197.0 95.8L1199.0 96.6L1201.0 96.6L1203.0 95.5L1205.0 96.7L1207.0 96.6L1209.0 95.9L1211.0 96.5L1213.0 96.4L1215.0 96.2L1217.0 97.0L1219.0 97.7L1221.0 96.7L1223.0 97.7L1225.0 97.4L1227.0 96.6L1229.0 97.8L1231.0 97.4L1233.0 98.0L1235.0 97.7L1237.0 97.8L1239.0 97.2L1241.0 98.0L1243.0 98.2L1245.0 98.2L1247.0 97.5L1249.0 98.1L1251.0 97.7L1253.0 97.2L1255.0 97.1L1257.0 97.2L1259.0 97.4L1261.0 97.4L1263.0 97.9L1265.0 97.9L1267.0 97.4L1269.0 97.0L1271.0 97.1L1273.0 96.3L1275.0 96.3L1277.0 96.5L1279.0 95.9L1281.0 95.6L1283.0 96.8L1285.0 96.6L1287.0 96.1L1289.0 96.2L1291.0 96.5L1293.0 96.7L1295.0 96.2L1297.0 95.9L1299.0 96.3L1301.0 97.5L1303.0 96.8L1305.0 97.5L1307.0 97.4L1309.0 97.7L1311.0 97.9L1313.0 98.5L1315.0 98.4L1317.0 98.4L1319.0 98.8L1321.0 99.2L1323.0 99.9L1325.0 99.5L1327.0 99.7L1329.0 100.7L1331.0 100.9L1333.0 101.6L1335.0 100.8L1337.0 101.7L1339.0 101.9L1341.0 101.5L1343.0 103.2L1345.0 102.3L1347.0 102.3L1349.0 103.1L1351.0 102.8L1353.0 103.7L1355.0 103.5L1357.0 103.3L1359.0 103.4L1361.0 104.7L1363.0 104.1L1365.0 105.2L1367.0 104.8L1369.0 105.8L1371.0 105.0L1373.0 105.1L1375.0 105.3L1377.0 106.4L1379.0 106.3L1381.0 106.1L1383.0 105.5L1385.0 106.3L1387.0 106.7L1389.0 105.9L1391.0 104.9L1393.0 104.8L1395.0 104.7L1397.0 104.7L1399.0 104.4L1401.0 104.3L1403.0 104.9L1405.0 105.0L1407.0 103.6L1409.0 104.6L1411.0 103.5L1413.0 103.7L1415.0 103.6L1417.0 103.3L1419.0 101.6L1421.0 101.7L1423.0 101.9L1425.0 102.1L1427.0 100.5L1429.0 100.5L1431.0 101.1L1433.0 99.6L1435.0 99.8L1437.0 99.4L1439.0 99.6L1441.0 99.7L1443.0 98.2L1445.0 98.6L1447.0 98.2L1449.0 97.9L1451.0 97.1L1453.0 97.2L1455.0 95.9L1457.0 95.6L1459.0 94.8L1461.0 95.3L1463.0 94.4L1465.0 93.6L1467.0 93.0L1469.0 93.5L1471.0 92.9L1473.0 92.9L1475.0 92.3L1477.0 92.4L1479.0 91.8L1481.0 92.6L1483.0 91.4L1485.0 92.0L1487.0 92.3L1489.0 92.1L1491.0 91.1L1493.0 91.2L1495.0 92.1L1497.0 91.7L1499.0 91.9L1501.0 91.8L1503.0 91.1L1505.0 91.7L1507.0 91.4L1509.0 90.7L1511.0 90.6L1513.0 90.1L1515.0 90.5L1517.0 91.4L1519.0 89.9L1521.0 90.6L1523.0 89.8L1525.0 89.7L1527.0 90.5L1529.0 89.8L1531.0 89.4L1533.0 89.5L1535.0 90.2L1537.0 90.0L1539.0 89.3L1541.0 89.9L1543.0 91.2L1545.0 90.3L1547.0 91.0L1549.0 91.0L1551.0 91.7L1553.0 91.7L1555.0 92.2L1557.0 92.0L1559.0 91.6L1561.0 91.8L1563.0 91.8L1565.0 93.2L1567.0 92.0L1569.0 91.7L1571.0 93.2L1573.0 91.8L1575.0 92.8L1577.0 91.5L1579.0 92.0L1581.0 91.5L1583.0 92.4L1585.0 91.9L1587.0 91.9L1589.0 92.0L1591.0 92.0L1593.0 91.1L1595.0 91.4L1597.0 91.1L1599.0 90.6L1601.0 92.0L1603.0 91.8L1605.0 92.4L1607.0 91.7L1609.0 92.5L1611.0 92.6L1613.0 93.3L1615.0 92.5L1617.0 93.1L1619.0 93.6L1621.0 93.2L1623.0 94.2L1625.0 94.7L1627.0 94.4L1629.0 95.0L1631.0 95.2L1633.0 94.8L1635.0 95.3L1637.0 96.6L1639.0 95.7L1641.0 95.9L1643.0 95.3L1645.0 95.5L1647.0 95.4L1649.0 96.6L1651.0 96.2L1653.0 96.5L1655.0 96.6L1657.0 96.0L1659.0 96.5L1661.0 95.8L1663.0 95.6L1665.0 96.5L1667.0 96.4L1669.0 96.4L1671.0 95.7L1673.0 96.1L1675.0 95.5L1677.0 96.4L1679.0 96.3L1681.0 95.2L1683.0 96.2L1685.0 95.0L1687.0 94.8L1689.0 95.7L1691.0 95.0L1693.0 95.3L1695.0 95.5L1697.0 94.4L1699.0 95.5L1701.0 94.7L1703.0 94.9L1705.0 94.7L1707.0 95.3L1709.0 95.3L1711.0 94.5L1713.0 94.2L1715.0 94.4L1717.0 94.6L1719.0 94.0L1721.0 94.0L1723.0 95.0L1725.0 94.8L1727.0 95.2L1729.0 95.2L1731.0 94.8L1733.0 93.7L1735.0 93.2L1737.0 93.2L1739.0 93.2L1741.0 93.1L1743.0 92.9L1745.0 92.4L1747.0 92.9L1749.0 91.8L1751.0 91.8L1753.0 92.3L1755.0 91.9L1757.0 90.9L1759.0 90.7L1761.0 91.7L1763.0 90.5L1765.0 90.8L1767.0 91.5L1769.0 91.6L1771.0 91.1L1773.0 91.0L1775.0 91.3L1777.0 92.3L1779.0 91.9L1781.0 92.8L1783.0 92.6L1785.0 92.9L1787.0 91.5" stroke="#f010f0" stroke-width="1.80" fill="none" stroke-linejoin="round" />
<rect x="113" y="406.5" width="1677" height="2" fill="#d0d0d0"/>
<rect x="113" y="409.5" width="1677" height="2.5" fill="#98ff98"/>
<path d="M113.0 380.9L114.1 407.5L115.4 407.5L116.5 398.6L117.2 407.5L118.2 389.8L119.6 398.6L120.7 380.9L121.4 407.5L123.1 380.9L124.1 407.5L125.7 389.8L126.5 407.5L127.2 389.8L127.9 380.9L128.3 407.5L129.5 380.9L129.8 398.6L131.4 389.8L132.1 407.5L133.4 380.9L134.7 407.5L136.0 398.6L136.4 407.5L137.0 407.5L138.2 398.6L139.1 389.8L140.1 407.5L140.7 380.9L142.1 380.9L143.0 398.6L144.1 398.6L144.3 398.6L146.1 398.6L147.0 398.6L148.4 372.1L149.5 398.6L150.8 398.6L151.7 398.6L153.1 398.6L154.1 372.1L155.4 407.5L156.1 354.4L157.4 389.8L158.7 336.7L159.7 389.8L160.7 345.6L161.5 389.8L162.1 327.9L163.0 407.5L163.8 363.2L164.2 345.6L165.7 336.7L166.7 398.6L167.4 336.7L168.6 389.8L169.6 327.9L170.7 336.7L171.7 380.9L172.6 345.6L173.8 398.6L175.1 327.9L176.2 407.5L177.1 354.4L178.4 398.6L179.4 327.9L180.5 372.1L181.7 380.9L183.2 354.4L184.3 398.6L185.4 354.4L186.2 407.5M186.0 354.4L187.2 354.4L188.1 407.5L189.5 407.5L190.0 407.5L191.7 407.5L192.4 398.6L193.5 407.5L194.9 407.5L196.5 407.5L197.2 380.9L198.7 407.5L199.2 407.5L200.0 407.5L201.5 389.8L203.3 407.5L204.2 380.9L205.1 372.1L206.5 407.5L208.3 407.5L209.3 372.1L210.7 407.5L211.3 363.2L212.6 407.5L214.0 363.2L215.5 407.5L217.0 354.4L218.4 407.5L220.0 407.5L220.6 407.5L222.6 363.2L224.0 407.5L225.6 380.9L226.4 407.5L227.4 407.5L228.8 363.2L230.5 407.5L230.9 380.9L232.4 407.5L233.9 372.1L235.0 407.5L235.7 407.5L237.2 345.6L239.2 407.5L240.8 372.1L242.2 407.5L242.7 363.2L244.4 407.5L245.5 407.5L247.3 407.5L248.4 407.5L249.7 407.5L250.9 354.4L252.6 354.4L253.9 363.2L254.8 407.5L256.1 407.5L257.9 389.8L259.0 380.9L260.7 407.5L262.1 380.9L263.1 407.5L264.0 407.5L265.4 398.6L266.7 407.5L268.4 407.5L270.3 389.8L271.4 407.5L272.8 407.5L274.1 407.5L275.5 407.5L277.2 389.8L278.7 380.9L279.2 407.5L280.7 407.5L282.7 389.8L284.1 407.5L285.4 389.8L287.3 407.5L288.7 380.9L289.9 407.5L290.7 389.8L291.6 407.5M662.2 407.5L663.0 407.5L664.5 407.5L665.8 407.5L666.5 407.5L668.5 407.5L669.8 407.5L670.7 407.5L671.9 407.5L672.7 407.5L674.7 407.5L675.7 407.5L677.0 407.5L678.1 407.5L679.3 398.6L680.8 407.5L681.8 407.5L682.9 407.5L684.5 407.5L686.2 407.5L687.0 407.5L688.2 407.5L689.8 407.5L691.2 407.5L691.8 407.5L693.8 407.5L695.0 407.5L696.4 407.5L697.3 407.5L698.8 407.5L700.7 389.8L701.7 407.5L703.1 407.5L704.2 407.5L705.6 407.5L706.8 407.5L708.0 407.5L709.2 407.5L711.0 398.6L712.5 407.5L713.6 407.5L715.2 407.5L716.1 407.5L717.5 407.5L718.6 407.5L720.6 407.5L721.7 407.5L722.4 389.8L723.7 407.5L725.0 407.5L726.3 407.5L727.1 407.5L728.3 407.5L729.6 407.5L730.8 407.5L732.6 407.5L734.0 407.5L735.6 407.5L737.1 407.5L738.8 407.5L740.7 407.5L742.1 398.6L743.6 407.5L745.1 407.5L746.2 407.5L747.6 407.5L748.6 407.5L750.1 407.5L752.2 407.5L752.6 407.5L753.5 407.5L755.2 407.5L756.3 407.5L757.6 407.5L758.9 407.5L760.6 407.5L761.0 398.6L762.4 407.5L764.0 407.5L764.8 407.5L766.3 407.5L768.2 380.9L769.6 407.5L770.5 407.5L772.6 407.5L773.3 407.5L775.2 407.5L775.9 407.5L777.9 407.5L779.0 363.2L780.6 407.5L781.8 407.5L782.9 372.1L784.6 407.5L785.9 380.9L787.5 407.5L788.8 407.5L789.9 407.5L790.9 407.5L793.1 407.5L793.6 407.5L795.1 372.1L795.7 407.5L797.3 363.2L798.3 407.5L799.8 407.5L801.6 407.5L802.3 407.5L803.3 407.5L804.7 407.5L805.7 407.5L806.8 363.2L808.4 407.5L810.0 407.5L811.0 380.9L812.1 407.5L813.2 407.5L814.4 407.5L815.7 407.5L816.7 407.5L817.9 407.5L819.1 380.9L820.6 407.5L821.6 380.9L822.1 407.5L823.2 407.5L824.7 407.5L825.4 363.2L826.9 372.1L827.5 407.5L828.5 407.5L830.4 407.5L831.3 354.4L832.1 407.5L833.0 407.5L834.0 407.5L834.9 389.8L836.4 407.5L837.5 407.5L838.4 407.5L839.7 407.5L840.7 407.5L841.7 389.8L843.7 407.5L845.0 389.8L846.3 407.5L846.8 407.5L847.9 407.5L849.6 407.5L850.8 407.5L852.4 398.6L853.1 407.5L854.9 398.6L855.6 407.5L856.6 398.6L857.7 407.5L858.9 407.5L859.6 407.5L860.4 407.5L861.7 407.5L863.6 407.5L865.2 407.5L866.4 380.9L867.7 407.5L869.5 380.9L870.9 389.8L871.3 407.5L872.7 407.5L874.2 407.5M1211.1 380.9L1212.5 407.5L1214.2 363.2L1214.6 407.5L1216.0 336.7L1217.1 407.5L1218.9 407.5L1220.6 319.0L1222.2 407.5L1223.7 319.0L1224.3 389.8L1225.6 354.4L1226.7 407.5L1227.3 319.0L1228.6 389.8L1229.0 336.7L1230.6 398.6L1231.9 310.1L1232.6 380.9L1233.9 336.7L1235.2 407.5L1236.3 398.6L1237.5 398.6L1239.3 301.3L1239.9 380.9L1241.3 327.9L1243.1 380.9L1244.0 301.3L1245.3 407.5L1246.2 319.0L1247.7 389.8L1248.6 389.8L1250.1 310.1L1251.9 372.1L1253.1 301.3L1254.1 389.8L1255.8 327.9L1257.2 398.6L1257.7 301.3L1259.6 380.9L1260.6 319.0L1261.7 372.1L1262.8 310.1L1264.8 380.9L1265.5 319.0L1266.7 327.9L1267.3 380.9L1268.2 310.1L1269.9 380.9L1271.3 319.0L1272.1 389.8L1273.9 319.0L1274.9 380.9L1275.5 319.0L1276.7 389.8L1278.0 327.9L1280.0 389.8L1281.6 319.0L1282.3 327.9L1283.3 363.2L1284.5 389.8L1285.6 301.3L1286.9 380.9L1288.6 310.1L1289.4 398.6L1290.2 310.1L1290.8 372.1L1292.4 380.9L1292.7 380.9L1294.5 319.0L1295.4 380.9L1296.2 336.7L1297.7 372.1L1298.4 310.1L1299.7 389.8L1301.4 372.1L1302.2 319.0L1303.5 389.8L1304.6 389.8L1306.3 310.1L1307.1 372.1L1308.3 319.0L1309.1 407.5L1310.1 336.7L1311.1 372.1L1312.8 345.6L1313.6 389.8L1315.0 319.0L1315.8 398.6L1316.9 319.0L1317.4 372.1L1319.2 310.1L1319.9 319.0L1320.3 372.1L1322.2 310.1L1322.7 389.8L1324.1 336.7L1324.7 372.1L1325.6 327.9L1327.4 389.8L1327.9 319.0L1329.2 301.3L1330.0 398.6L1331.4 327.9L1332.9 389.8L1333.7 319.0L1335.2 398.6L1336.3 310.1L1337.5 380.9L1338.2 327.9L1339.5 407.5L1340.9 336.7L1342.0 372.1L1343.5 336.7L1345.3 380.9L1346.3 310.1L1347.3 389.8L1348.2 319.0L1349.6 372.1L1350.9 319.0L1352.0 372.1L1353.8 310.1L1355.0 372.1L1356.2 301.3L1357.4 372.1L1357.9 327.9L1359.8 407.5L1360.7 301.3L1362.1 389.8L1362.8 319.0L1364.0 372.1L1365.5 310.1L1366.6 372.1L1368.1 310.1L1369.4 389.8L1370.2 292.4L1372.2 310.1L1373.8 407.5L1374.7 327.9L1376.4 389.8L1377.7 336.7L1378.6 389.8L1379.5 336.7L1381.1 398.6L1382.4 310.1L1384.4 398.6L1385.1 310.1L1386.2 380.9L1387.1 319.0L1388.4 389.8L1390.5 336.7L1392.0 372.1L1393.7 345.6L1394.7 389.8L1395.8 345.6L1396.6 398.6L1398.1 310.1L1398.8 407.5L1400.3 336.7L1401.3 372.1L1403.1 336.7L1403.4 398.6L1404.3 398.6L1405.7 389.8L1406.7 354.4L1407.6 389.8L1409.3 327.9L1410.6 398.6L1411.8 327.9L1412.6 398.6L1414.3 354.4L1415.6 389.8L1416.5 345.6L1417.6 398.6L1419.4 336.7L1420.4 327.9L1421.4 398.6L1422.5 327.9L1423.7 398.6L1425.2 336.7L1426.4 398.6L1428.3 407.5L1429.2 407.5L1430.7 336.7L1431.8 407.5M1432.2 398.6L1433.8 407.5L1434.8 407.5L1436.3 407.5L1437.6 407.5L1438.7 407.5L1440.7 389.8L1442.6 407.5L1444.0 407.5L1445.4 407.5L1446.2 407.5L1447.8 407.5L1449.0 407.5L1451.0 407.5L1452.9 407.5L1454.8 407.5L1455.6 407.5L1457.0 407.5L1458.6 407.5L1460.0 407.5L1461.3 389.8L1462.7 398.6L1464.3 398.6L1465.5 407.5L1466.4 407.5L1468.2 407.5L1469.6 407.5L1471.5 407.5M1755.2 398.6L1755.9 407.5L1757.1 389.8L1758.3 407.5L1759.4 363.2L1760.5 398.6L1762.1 354.4L1762.9 398.6L1764.2 407.5L1765.5 398.6L1767.5 398.6L1768.5 398.6L1769.7 354.4L1771.4 398.6L1772.9 363.2L1773.7 398.6L1775.3 372.1L1776.4 398.6L1778.1 407.5L1779.5 407.5L1780.1 345.6L1781.6 407.5L1782.6 336.7L1783.8 398.6L1785.2 354.4L1786.6 398.6L1787.9 372.1L1788.7 407.5" stroke="#e4e4e4" stroke-width="1.4" fill="none" stroke-linejoin="miter" stroke-miterlimit="2"/>
<path d="M179.1 407.5L180.0 301.3L180.9 407.5M163.1 407.5L164.0 319.0L164.9 407.5M170.1 407.5L171.0 319.0L171.9 407.5M158.1 407.5L159.0 327.9L159.9 407.5M219.1 407.5L220.0 319.0L220.9 407.5M240.1 407.5L241.0 327.9L241.9 407.5M243.1 407.5L244.0 336.7L244.9 407.5M254.1 407.5L255.0 345.6L255.9 407.5M258.1 407.5L259.0 354.4L259.9 407.5M229.1 407.5L230.0 354.4L230.9 407.5M213.1 407.5L214.0 354.4L214.9 407.5M201.1 407.5L202.0 354.4L202.9 407.5M183.1 407.5L184.0 336.7L184.9 407.5M148.1 407.5L149.0 363.2L149.9 407.5M152.7 407.5L153.6 363.2L154.5 407.5M119.1 407.5L120.0 372.1L120.9 407.5M277.1 407.5L278.0 372.1L278.9 407.5M286.1 407.5L287.0 380.9L287.9 407.5M270.1 407.5L271.0 389.8L271.9 407.5M299.1 407.5L300.0 398.6L300.9 407.5M312.1 407.5L313.0 398.6L313.9 407.5M314.1 407.5L315.0 398.6L315.9 407.5M664.9 407.5L665.8 354.4L666.7 407.5M672.0 407.5L672.9 345.6L673.8 407.5M684.8 407.5L685.7 345.6L686.6 407.5M690.1 407.5L691.0 345.6L691.9 407.5M696.6 407.5L697.5 372.1L698.4 407.5M700.1 407.5L701.0 363.2L701.9 407.5M702.1 407.5L703.0 372.1L703.9 407.5M662.1 407.5L663.0 380.9L663.9 407.5M715.1 407.5L716.0 380.9L716.9 407.5M720.1 407.5L721.0 380.9L721.9 407.5M724.7 407.5L725.6 380.9L726.5 407.5M735.8 407.5L736.7 398.6L737.6 407.5M744.1 407.5L745.0 398.6L745.9 407.5M755.1 407.5L756.0 380.9L756.9 407.5M758.7 407.5L759.6 380.9L760.5 407.5M766.1 407.5L767.0 380.9L767.9 407.5M768.1 407.5L769.0 345.6L769.9 407.5M773.1 407.5L774.0 380.9L774.9 407.5M778.6 407.5L779.5 327.9L780.4 407.5M786.8 407.5L787.7 363.2L788.6 407.5M794.1 407.5L795.0 363.2L795.9 407.5M802.6 407.5L803.5 327.9L804.4 407.5M809.6 407.5L810.5 372.1L811.4 407.5M824.9 407.5L825.8 354.4L826.7 407.5M829.1 407.5L830.0 319.0L830.9 407.5M831.1 407.5L832.0 372.1L832.9 407.5M841.9 407.5L842.8 380.9L843.7 407.5M845.4 407.5L846.3 380.9L847.2 407.5M850.7 407.5L851.6 398.6L852.5 407.5M856.1 407.5L857.0 398.6L857.9 407.5M862.1 407.5L863.0 372.1L863.9 407.5M871.1 407.5L872.0 380.9L872.9 407.5M667.1 407.5L668.0 398.6L668.9 407.5M675.1 407.5L676.0 398.6L676.9 407.5M679.1 407.5L680.0 398.6L680.9 407.5M688.1 407.5L689.0 398.6L689.9 407.5M693.1 407.5L694.0 398.6L694.9 407.5M705.1 407.5L706.0 398.6L706.9 407.5M710.1 407.5L711.0 398.6L711.9 407.5M729.1 407.5L730.0 398.6L730.9 407.5M740.1 407.5L741.0 398.6L741.9 407.5M748.1 407.5L749.0 398.6L749.9 407.5M751.1 407.5L752.0 398.6L752.9 407.5M761.1 407.5L762.0 398.6L762.9 407.5M776.1 407.5L777.0 398.6L777.9 407.5M783.1 407.5L784.0 398.6L784.9 407.5M790.1 407.5L791.0 398.6L791.9 407.5M798.1 407.5L799.0 398.6L799.9 407.5M805.1 407.5L806.0 398.6L806.9 407.5M814.1 407.5L815.0 398.6L815.9 407.5M819.1 407.5L820.0 398.6L820.9 407.5M837.1 407.5L838.0 398.6L838.9 407.5M848.1 407.5L849.0 398.6L849.9 407.5M853.1 407.5L854.0 398.6L854.9 407.5M867.1 407.5L868.0 398.6L868.9 407.5M1438.1 407.5L1439.0 380.9L1439.9 407.5M1448.4 407.5L1449.3 354.4L1450.2 407.5M1453.5 407.5L1454.4 354.4L1455.3 407.5M1459.7 407.5L1460.6 354.4L1461.5 407.5M1469.1 407.5L1470.0 380.9L1470.9 407.5M1443.1 407.5L1444.0 389.8L1444.9 407.5M1464.1 407.5L1465.0 389.8L1465.9 407.5M1258.1 380.9L1259.0 265.9L1259.9 380.9M1303.7 380.9L1304.6 265.9L1305.5 380.9M1370.1 380.9L1371.0 265.9L1371.9 380.9M1401.8 380.9L1402.7 292.4L1403.6 380.9M1239.1 380.9L1240.0 301.3L1240.9 380.9M1282.1 380.9L1283.0 292.4L1283.9 380.9M1324.1 380.9L1325.0 310.1L1325.9 380.9M1351.1 380.9L1352.0 301.3L1352.9 380.9M1214.1 380.9L1215.0 345.6L1215.9 380.9M1229.1 380.9L1230.0 327.9L1230.9 380.9M1337.1 380.9L1338.0 310.1L1338.9 380.9M1394.1 380.9L1395.0 319.0L1395.9 380.9M1419.1 380.9L1420.0 319.0L1420.9 380.9M1512.9 407.5L1513.8 398.6L1514.7 407.5M1517.6 407.5L1518.5 380.9L1519.4 407.5M1523.7 407.5L1524.6 398.6L1525.5 407.5M1528.1 407.5L1529.0 380.9L1529.9 407.5M1531.1 407.5L1532.0 380.9L1532.9 407.5M1533.1 407.5L1534.0 398.6L1534.9 407.5M1536.1 407.5L1537.0 389.8L1537.9 407.5M1561.1 407.5L1562.0 398.6L1562.9 407.5M1593.1 407.5L1594.0 398.6L1594.9 407.5M1653.1 407.5L1654.0 380.9L1654.9 407.5M1752.1 407.5L1753.0 398.6L1753.9 407.5M1763.7 398.6L1764.6 310.1L1765.5 398.6M1780.6 398.6L1781.5 327.9L1782.4 398.6M1778.1 398.6L1779.0 336.7L1779.9 398.6M1786.1 398.6L1787.0 336.7L1787.9 398.6M1756.8 398.6L1757.7 372.1L1758.6 398.6" stroke="#f4f4f4" stroke-width="1.4" fill="none" stroke-miterlimit="2"/>
<path d="M113.0 408.2L114.5 407.6L116.0 405.4L117.5 403.1L119.0 402.8L120.5 401.5L122.0 402.1L123.5 401.7L125.0 400.4L126.5 400.5L128.0 400.0L129.5 400.6L131.0 401.7L132.5 402.5L134.0 404.2L135.5 406.8L137.0 408.4L138.5 405.0L140.0 403.3L141.5 402.5L143.0 401.5L144.5 400.6L146.0 400.0L147.5 399.4L149.0 397.9L150.5 397.8L152.0 397.4L153.5 397.0L155.0 397.6L156.5 396.3L158.0 395.2L159.5 394.0L161.0 389.4L162.5 382.2L164.0 376.8L165.5 373.7L167.0 376.2L168.5 381.1L170.0 383.5L171.5 390.0L173.0 390.6L174.5 389.5L176.0 389.3L177.5 391.0L179.0 391.4L180.5 393.2L182.0 395.2L183.5 398.5L185.0 401.2L186.5 404.8L188.0 405.4L189.5 408.2L191.0 408.3L192.5 408.3L194.0 408.7L195.5 407.6L197.0 407.5L198.5 408.2L200.0 408.6L201.5 408.7L203.0 408.5L204.5 408.2L206.0 407.8L207.5 408.5L209.0 408.2L210.5 408.6L212.0 408.4L213.5 408.0L215.0 408.2L216.5 406.0L218.0 404.7L219.5 404.9L221.0 406.3L222.5 406.7L224.0 407.5L225.5 407.9L227.0 408.1L228.5 407.8L230.0 407.8L231.5 408.7L233.0 407.8L234.5 407.9L236.0 408.7L237.5 407.7L239.0 406.7L240.5 404.1L242.0 405.4L243.5 406.5L245.0 406.8L246.5 408.2L248.0 407.6L249.5 408.5L251.0 408.0L252.5 407.7L254.0 408.8L255.5 408.0L257.0 408.1L258.5 408.7L260.0 407.7L261.5 407.9L263.0 407.9L264.5 405.9L266.0 405.6L267.5 406.3L269.0 408.0L270.5 408.2L272.0 408.7L273.5 408.2L275.0 407.8L276.5 408.1L278.0 408.4L279.5 408.7L281.0 408.5L282.5 408.4L284.0 408.3L285.5 408.8L287.0 409.2L288.5 409.1L290.0 408.3" stroke="#18f018" stroke-width="1.50" fill="none" stroke-linejoin="round" />
<path d="M662.0 409.2L663.5 408.2L665.0 408.7L666.5 409.4L668.0 409.5L669.5 409.2L671.0 409.5L672.5 409.3L674.0 408.3L675.5 409.2L677.0 409.0L678.5 409.0L680.0 408.9L681.5 407.5L683.0 405.9L684.5 406.3L686.0 406.6L687.5 408.2L689.0 409.8L690.5 409.4L692.0 409.5L693.5 409.0L695.0 409.3L696.5 409.6L698.0 409.4L699.5 409.2L701.0 408.3L702.5 407.2L704.0 407.6L705.5 405.6L707.0 406.0L708.5 407.2L710.0 407.3L711.5 408.9L713.0 409.6L714.5 409.1L716.0 409.2L717.5 409.2L719.0 409.4L720.5 409.5L722.0 409.5L723.5 409.8L725.0 408.4L726.5 409.4L728.0 409.4L729.5 408.9L731.0 409.2L732.5 409.2L734.0 409.0L735.5 409.0L737.0 408.6L738.5 408.6L740.0 408.6L741.5 408.7L743.0 409.7L744.5 409.4L746.0 409.2L747.5 408.4L749.0 409.0L750.5 408.6L752.0 409.5L753.5 408.8L755.0 408.8L756.5 409.6L758.0 409.6L759.5 409.4L761.0 408.1L762.5 408.1L764.0 406.5L765.5 407.0L767.0 405.9L768.5 407.4L770.0 407.3L771.5 408.8L773.0 408.7L774.5 408.5L776.0 408.3L777.5 408.9L779.0 409.4L780.5 409.4L782.0 409.2L783.5 408.8L785.0 409.6L786.5 408.2L788.0 408.3L789.5 408.4L791.0 408.7L792.5 406.3L794.0 405.2L795.5 406.0L797.0 406.9L798.5 407.7L800.0 409.3L801.5 408.6L803.0 408.2L804.5 408.3L806.0 409.6L807.5 409.7L809.0 409.3L810.5 409.1L812.0 409.6L813.5 408.7L815.0 409.0L816.5 409.1L818.0 408.5L819.5 408.7L821.0 407.6L822.5 407.8L824.0 405.9L825.5 404.8L827.0 403.9L828.5 403.8L830.0 402.7L831.5 404.6L833.0 406.6L834.5 406.9L836.0 409.5L837.5 409.8L839.0 408.6L840.5 409.5L842.0 408.3L843.5 408.4L845.0 408.4L846.5 408.6L848.0 409.0L849.5 408.6L851.0 409.4L852.5 408.8L854.0 408.8L855.5 408.8L857.0 408.2L858.5 409.8L860.0 409.1L861.5 408.8L863.0 408.9L864.5 408.2L866.0 409.0L867.5 408.5L869.0 409.1L870.5 408.6L872.0 408.6L873.5 409.2L875.0 408.3" stroke="#18f018" stroke-width="1.50" fill="none" stroke-linejoin="round" />
<path d="M1211.0 407.9L1212.0 408.2L1213.0 405.8L1214.0 403.2L1215.0 405.6L1216.0 401.0L1217.0 403.6L1218.0 401.4L1219.0 402.8L1220.0 403.1L1221.0 402.1L1222.0 402.9L1223.0 405.0L1224.0 402.0L1225.0 402.7L1226.0 400.7L1227.0 403.4L1228.0 400.1L1229.0 402.1L1230.0 399.1L1231.0 399.5L1232.0 402.9L1233.0 401.1L1234.0 403.8L1235.0 401.1L1236.0 403.5L1237.0 401.5L1238.0 403.4L1239.0 402.7L1240.0 405.2L1241.0 405.5L1242.0 402.5L1243.0 405.0L1244.0 403.1L1245.0 404.1L1246.0 403.5L1247.0 402.2L1248.0 399.6L1249.0 404.4L1250.0 403.2L1251.0 403.3L1252.0 405.8L1253.0 403.9L1254.0 403.3L1255.0 406.3L1256.0 402.8L1257.0 402.2L1258.0 401.5L1259.0 403.4L1260.0 400.9L1261.0 399.9L1262.0 400.1L1263.0 398.6L1264.0 399.7L1265.0 398.7L1266.0 398.1L1267.0 398.5L1268.0 396.0L1269.0 394.6L1270.0 394.1L1271.0 396.4L1272.0 397.6L1273.0 397.2L1274.0 397.7L1275.0 399.8L1276.0 399.1L1277.0 400.5L1278.0 396.8L1279.0 398.3L1280.0 400.0L1281.0 399.5L1282.0 396.1L1283.0 395.2L1284.0 395.3L1285.0 396.3L1286.0 396.0L1287.0 399.2L1288.0 395.9L1289.0 399.3L1290.0 396.6L1291.0 400.3L1292.0 401.1L1293.0 401.3L1294.0 398.7L1295.0 399.2L1296.0 398.0L1297.0 400.4L1298.0 400.8L1299.0 399.8L1300.0 395.1L1301.0 396.5L1302.0 396.2L1303.0 395.9L1304.0 394.3L1305.0 395.1L1306.0 394.0L1307.0 394.6L1308.0 397.0L1309.0 398.4L1310.0 396.4L1311.0 394.7L1312.0 394.9L1313.0 397.5L1314.0 398.6L1315.0 398.6L1316.0 399.0L1317.0 396.8L1318.0 394.3L1319.0 397.8L1320.0 394.6L1321.0 398.0L1322.0 398.2L1323.0 397.6L1324.0 396.8L1325.0 392.9L1326.0 394.6L1327.0 397.7L1328.0 399.1L1329.0 398.7L1330.0 398.2L1331.0 396.6L1332.0 398.1L1333.0 401.3L1334.0 398.0L1335.0 397.8L1336.0 398.7L1337.0 400.2L1338.0 400.6L1339.0 400.0L1340.0 403.2L1341.0 399.1L1342.0 402.8L1343.0 400.3L1344.0 401.9L1345.0 398.2L1346.0 398.6L1347.0 397.3L1348.0 398.2L1349.0 396.7L1350.0 397.3L1351.0 399.2L1352.0 399.1L1353.0 397.0L1354.0 399.3L1355.0 396.7L1356.0 396.3L1357.0 397.7L1358.0 399.8L1359.0 401.2L1360.0 402.8L1361.0 401.4L1362.0 402.1L1363.0 397.1L1364.0 395.8L1365.0 396.4L1366.0 393.5L1367.0 393.7L1368.0 391.0L1369.0 392.2L1370.0 390.1L1371.0 387.5L1372.0 388.8L1373.0 388.8L1374.0 392.4L1375.0 392.7L1376.0 391.5L1377.0 394.5L1378.0 394.8L1379.0 396.7L1380.0 397.5L1381.0 399.5L1382.0 396.8L1383.0 397.9L1384.0 398.2L1385.0 402.3L1386.0 402.9L1387.0 399.0L1388.0 404.3L1389.0 401.9L1390.0 403.6L1391.0 400.4L1392.0 402.0L1393.0 401.0L1394.0 403.2L1395.0 400.9L1396.0 405.9L1397.0 405.5L1398.0 406.1L1399.0 402.9L1400.0 403.3L1401.0 400.5L1402.0 404.7L1403.0 404.2L1404.0 399.7L1405.0 400.0L1406.0 400.5L1407.0 401.0L1408.0 399.0L1409.0 403.5L1410.0 403.8L1411.0 400.0L1412.0 403.2L1413.0 403.5L1414.0 405.7L1415.0 402.2L1416.0 402.2L1417.0 405.4L1418.0 404.0L1419.0 405.9L1420.0 403.7L1421.0 408.0L1422.0 404.5L1423.0 407.6L1424.0 409.1L1425.0 405.4L1426.0 409.7L1427.0 406.0L1428.0 411.3L1429.0 407.4L1430.0 410.1L1431.0 410.2L1432.0 406.7L1433.0 410.3L1434.0 406.6L1435.0 408.5L1436.0 410.0L1437.0 411.0L1438.0 406.8L1439.0 408.8L1440.0 409.4L1441.0 411.1L1442.0 409.2L1443.0 408.1L1444.0 411.4L1445.0 409.6L1446.0 408.4L1447.0 408.4L1448.0 406.6L1449.0 410.4L1450.0 410.5L1451.0 409.3L1452.0 409.3L1453.0 409.0L1454.0 410.8L1455.0 411.5L1456.0 410.9L1457.0 409.6L1458.0 408.1L1459.0 407.3L1460.0 407.6L1461.0 408.3L1462.0 409.9L1463.0 407.0L1464.0 410.8L1465.0 406.7L1466.0 409.2L1467.0 410.3L1468.0 409.5L1469.0 407.1L1470.0 407.3L1471.0 409.9L1472.0 410.3L1473.0 411.3L1474.0 409.4L1475.0 409.2" stroke="#18f018" stroke-width="1.50" fill="none" stroke-linejoin="round" />
<path d="M1752.0 408.5L1753.5 409.8L1755.0 408.4L1756.5 409.4L1758.0 409.0L1759.5 407.9L1761.0 407.3L1762.5 405.7L1764.0 405.7L1765.5 404.6L1767.0 405.7L1768.5 404.6L1770.0 405.8L1771.5 404.5L1773.0 402.5L1774.5 403.0L1776.0 400.5L1777.5 399.2L1779.0 398.5L1780.5 397.6L1782.0 398.5L1783.5 401.1L1785.0 399.5L1786.5 399.8L1788.0 398.2L1789.5 404.0" stroke="#18f018" stroke-width="1.50" fill="none" stroke-linejoin="round" />
<path d="M128.1 445.9L128.4 443.8L129.0 530.2L129.6 452.7L130.1 453.2L130.4 454.2L131.2 454.8L131.6 453.2L131.8 529.8L132.7 444.7L132.8 543.5L133.4 550.6L134.0 448.5L134.4 456.1L135.2 549.9L135.7 456.2L136.1 443.5L136.2 543.6L136.8 442.8L137.6 455.4L138.2 451.0L138.5 544.5L139.4 529.0L139.9 542.5L140.4 449.5L140.4 448.2L141.3 440.0L141.7 449.3L142.1 448.9L142.6 541.4L143.0 449.8L143.7 439.9L144.3 455.5L144.9 450.6L145.3 445.2L146.0 452.0L146.5 451.8L147.0 551.5L147.6 442.4L148.0 445.5L148.4 442.0L149.0 439.9L149.4 442.1L150.1 535.3L150.6 536.5L150.9 444.2L151.6 445.4L151.9 456.3L152.3 454.7L152.8 456.4L153.5 446.5L153.7 449.8L153.9 442.2L154.6 455.4L155.1 439.9L155.6 445.6L156.5 447.0L156.6 543.7L157.5 537.7L157.7 449.3L158.6 450.3L158.9 545.8L159.3 439.4L159.9 454.9L160.1 443.1L161.0 452.2L161.2 545.6L161.8 448.6L162.3 455.0L162.9 451.0L163.4 450.6L163.9 452.6L164.5 447.3L164.9 446.7L165.3 440.7L166.1 453.6L166.3 442.1L166.6 443.1L167.1 539.2L167.6 442.5L168.2 442.9L169.0 439.5L169.5 532.5L170.0 454.7L170.1 446.1L170.7 456.3L171.7 542.5L171.9 535.8L172.6 541.6L172.9 527.2L173.4 539.0L174.0 536.9L174.4 542.0L175.0 539.3L175.5 543.0L176.4 531.3L176.7 528.8L177.2 537.6L177.6 528.7L178.3 534.3L178.8 546.5L179.2 543.9L179.5 535.2L180.0 536.7L180.6 540.7L181.0 527.0L181.5 535.1L181.8 531.5L182.2 544.5L182.8 535.2L183.2 539.3L183.6 547.9L183.9 533.7L184.5 542.3L184.6 544.6L185.0 548.1L185.6 536.4L186.2 533.8L186.5 543.3L186.9 532.4L187.3 528.7L187.6 529.7L188.2 539.2L188.5 542.5L189.0 536.9L189.7 533.6L190.3 535.6L190.6 531.0L191.2 542.4L191.3 542.4L192.1 541.2L192.4 539.4L192.6 533.1L193.5 540.5L193.9 541.5L194.4 535.7L195.0 532.9L195.5 542.8L195.8 539.7L196.2 530.1L196.9 528.5L197.8 442.7L198.6 458.3L198.9 443.4L199.4 447.1L199.6 449.5L200.2 453.6L200.7 450.2L201.4 443.0L201.9 537.7L202.3 449.3L202.9 452.8L203.3 453.8L204.1 549.9L204.7 445.8L205.3 455.9L205.5 439.7L205.9 452.1L206.5 441.0L207.0 445.7L207.3 441.5L207.6 447.1L208.3 531.7L208.9 528.8L209.3 441.2L209.8 439.8L210.2 448.4L210.8 447.7L211.5 459.0L212.0 453.6L212.7 455.5L212.9 458.2L213.3 457.1L214.2 444.7L214.6 440.7L215.1 549.0L215.5 539.8L216.0 448.8L216.7 452.4L217.4 440.3L217.9 454.1L218.3 444.7L218.8 538.7L219.2 453.2L219.7 451.4L220.0 454.6L220.8 448.9L220.8 452.8L221.5 452.7L221.9 452.2L222.5 439.7L222.9 454.4L223.3 550.4L223.9 441.2L224.2 459.8L224.8 442.8L225.6 532.0L226.0 526.4L226.3 539.5L226.8 450.6L227.2 441.6L227.9 440.0L228.3 440.8L228.8 540.5L229.6 457.1L230.1 458.4L230.5 452.5L231.0 455.2L231.6 444.8L232.1 460.2L232.5 447.4L233.1 459.5L233.6 454.0L234.3 452.5L234.7 440.2L235.2 551.3L235.7 440.7L236.3 457.4L236.6 455.9L237.3 453.1L237.7 454.5L238.0 442.8L238.7 455.1L238.9 441.3L239.2 444.7L239.9 442.9L240.2 447.9L240.8 447.4L240.9 459.0L241.6 450.6L242.1 458.9L242.3 444.3L242.9 444.3L243.1 457.0L243.8 456.0L244.3 451.3L244.7 457.4L245.0 448.2L245.6 538.8L246.2 451.4L246.5 458.1L247.2 454.7L247.7 457.9L248.2 446.9L248.6 439.7L249.0 454.8L249.4 459.0L250.2 547.0L250.6 528.0L250.8 547.9L251.3 527.2L252.3 545.8L252.8 538.5L253.0 543.7L253.7 441.4L254.3 463.0L254.6 454.6L255.1 542.0L255.8 534.7L256.1 546.1L256.5 538.3L257.1 546.1L257.5 532.0L258.3 533.9L258.4 457.6L259.1 539.0L259.7 547.3L260.1 538.9L260.8 536.9L261.2 548.5L261.3 536.2L262.2 529.0L262.4 533.7L263.1 535.2L263.7 531.7L263.9 552.9L264.4 548.1L264.7 530.1L265.5 530.9L266.2 529.0L266.6 552.2L267.2 551.5L267.6 544.7L267.9 455.7L268.5 538.1L269.0 531.0L269.5 448.6L269.8 538.3L270.6 530.9L270.8 546.3L271.2 548.3L271.6 535.9L272.2 546.6L272.8 531.2L273.5 534.6L274.1 529.7L274.4 536.2L274.9 531.8L275.3 541.4L275.5 533.8L276.1 537.7L276.6 546.8L276.9 541.6L277.4 526.9L278.0 537.9L278.5 538.1L279.0 542.4L279.6 529.1L280.1 539.2L280.7 541.5L280.9 538.3L281.6 554.3L282.2 547.7L282.8 536.8L283.4 544.4L283.9 528.2L284.2 539.6L284.9 446.7L285.3 539.1L285.8 538.5L286.3 529.8L286.7 537.0L287.1 534.5L287.6 459.3L288.1 525.9L288.4 545.7L289.1 465.1L289.6 441.3L289.8 544.6L290.7 552.5L291.0 531.8L291.4 552.9L292.0 542.8L292.5 446.2L293.2 541.2L293.3 550.2L294.0 543.3L294.2 531.8L294.9 447.3L295.4 534.1L295.9 536.0L296.5 536.5L297.0 533.5L297.6 533.7L297.9 546.1L298.3 547.8L299.1 546.7L299.3 543.2L299.7 453.6L300.5 532.0L300.9 550.9L301.6 540.1L302.1 532.3L302.7 548.8L303.4 532.0L303.8 535.5L304.3 546.5L305.0 528.8L305.3 526.6L305.9 527.6L306.7 536.3L307.2 526.3L307.6 547.4L307.9 544.1L308.7 543.0L308.9 541.0L309.6 545.1L309.9 542.8L310.4 536.5L310.8 538.4L310.9 547.7L311.7 525.9L312.1 541.5L311.9 441.0L312.4 452.0L312.7 441.8L313.2 455.6L313.8 440.8L314.3 447.2L314.7 459.8L315.0 447.1L315.7 450.7L316.2 459.0L316.4 454.6L317.0 442.0L317.6 444.0L318.0 459.1L318.6 442.8L319.3 457.7L319.6 527.0L320.4 444.0L320.7 542.8L320.9 453.5L321.3 450.2L322.0 441.8L322.4 459.7L323.0 445.9L323.3 446.2L324.0 458.1L324.4 453.5L325.2 450.7L325.6 459.4L326.2 453.3L326.9 450.5L327.4 441.8L328.0 448.2L328.3 456.6L328.7 446.9L330.0 555.0L331.5 460.3L333.0 457.1L334.8 444.0L349.5 444.0L349.6 538.0L352.0 536.7L357.0 535.4L359.3 531.2L654.6 531.2L655.0 464.6L671.0 464.6L672.0 466.9L674.0 462.0L675.7 447.3L676.5 535.4L677.0 548.0L677.7 527.7L678.1 535.2L678.4 532.3L679.0 531.6L679.7 533.4L680.1 546.7L680.7 534.3L681.3 452.9L681.8 545.7L682.1 535.0L682.9 540.5L683.3 539.6L684.0 532.6L684.6 535.0L685.0 535.2L685.6 527.7L686.0 539.2L686.5 544.6L687.1 529.8L687.5 538.7L688.1 528.4L688.9 541.0L689.0 539.6L689.8 545.1L690.3 456.2L691.2 460.2L691.6 542.4L692.0 449.3L692.2 543.8L692.9 542.6L693.5 541.2L693.8 533.9L694.5 528.7L694.7 528.9L695.4 532.2L696.2 537.9L696.4 460.1L696.8 532.8L697.2 536.0L697.9 542.5L698.7 540.2L698.9 454.0L699.5 460.9L699.9 542.7L700.2 536.5L701.1 526.9L701.3 528.3L701.9 540.1L702.4 542.3L702.8 537.8L703.4 449.5L703.8 537.1L704.4 533.3L704.6 440.4L705.2 443.7L705.7 542.8L706.2 544.7L706.5 528.4L707.1 539.8L707.6 448.8L708.1 444.6L708.8 453.3L709.1 542.1L709.8 547.0L710.1 539.7L710.8 537.1L711.3 541.0L711.8 537.7L712.0 536.2L712.5 527.4L713.2 538.2L713.3 545.2L714.0 526.0L714.5 534.8L715.3 532.4L715.9 549.3L716.5 453.8L716.9 546.8L717.5 461.4L718.0 453.2L718.5 446.3L719.2 537.8L719.5 545.4L720.2 549.9L720.6 528.8L721.3 539.5L721.9 528.1L722.2 536.0L722.9 532.5L723.2 533.1L723.7 541.7L724.6 525.7L724.9 542.9L725.5 539.4L725.8 527.6L726.0 454.2L726.7 444.8L727.2 458.5L727.3 455.5L727.8 458.1L728.5 445.4L728.8 453.7L729.5 445.2L730.3 450.4L730.4 443.2L731.1 443.4L731.9 455.3L732.3 440.4L732.7 546.6L733.2 529.8L733.5 456.8L734.0 439.2L734.5 449.8L735.3 449.9L735.8 447.7L736.6 447.9L737.1 444.1L737.3 450.8L738.2 456.7L738.6 461.4L739.0 453.9L739.7 444.1L740.1 461.9L740.6 460.3L741.0 533.7L741.4 439.8L742.0 535.0L742.5 449.2L743.2 440.1L743.8 459.3L744.3 455.4L744.6 458.0L745.3 439.7L745.6 459.2L745.9 449.6L746.5 442.7L747.1 454.8L748.0 454.1L748.3 457.5L748.9 447.9L749.4 530.6L749.6 546.2L750.2 440.0L750.7 446.0L751.2 455.7L751.7 454.0L752.1 450.7L752.9 444.5L753.2 439.9L753.7 443.9L754.0 441.2L754.7 445.9L755.3 449.3L755.6 442.3L756.3 461.4L756.9 442.9L756.9 446.3L757.7 537.7L758.1 531.5L758.4 543.0L758.9 453.0L759.4 459.0L760.1 544.0L760.7 544.2L761.1 529.2L761.7 531.9L762.2 542.4L762.6 535.0L763.1 439.5L763.6 464.5L764.1 552.5L764.6 542.6L765.1 546.0L765.9 457.3L766.3 546.3L766.7 551.7L767.2 460.9L767.7 530.8L768.2 547.3L768.7 461.8L769.3 447.9L769.5 540.7L770.5 528.0L770.5 541.6L771.3 551.0L771.9 528.5L772.1 530.8L772.8 452.3L773.3 461.2L773.8 540.7L774.1 530.5L774.8 536.1L775.2 543.5L775.7 451.0L776.3 447.4L776.7 533.7L777.3 527.1L777.7 543.6L778.1 541.3L778.7 537.6L779.4 527.6L780.1 456.6L780.2 449.0L781.0 530.3L781.2 527.8L781.6 443.7L782.4 442.4L782.8 457.1L783.3 539.1L783.6 464.5L784.3 440.7L784.5 464.9L785.1 453.3L785.8 457.0L786.2 456.3L786.9 547.5L787.4 454.9L787.8 538.3L788.3 543.0L788.9 464.0L789.4 546.0L790.0 455.2L790.1 541.1L791.0 529.7L791.6 544.1L792.2 455.0L792.6 536.9L792.9 449.3L793.6 452.1L794.1 541.4L794.8 526.2L795.0 534.4L795.7 535.5L796.1 540.5L796.7 552.7L797.1 539.7L797.8 535.8L798.2 546.3L798.5 537.8L798.7 536.0L799.1 547.2L800.0 450.1L799.9 533.8L800.5 534.1L800.8 531.9L801.2 528.4L801.7 535.4L802.3 445.7L802.6 458.5L803.5 439.8L803.8 528.6L804.2 464.3L804.8 534.7L805.3 539.3L805.9 528.6L806.4 545.3L807.2 539.0L807.9 526.4L807.9 546.8L808.5 448.0L809.3 452.2L809.8 460.9L810.4 526.1L810.8 531.3L811.4 526.9L811.8 553.4L812.4 529.1L813.0 543.1L813.4 544.1L813.7 534.6L814.1 526.6L814.9 538.3L815.3 545.0L816.1 536.7L816.4 539.8L816.6 546.2L817.3 548.3L817.9 542.6L818.0 534.3L818.7 547.0L818.9 536.8L819.5 444.9L820.3 533.6L821.0 526.1L821.4 544.3L821.9 532.9L822.4 449.9L822.8 464.3L823.2 456.8L823.8 439.8L824.5 440.2L824.9 531.6L825.2 527.3L825.7 445.9L826.3 528.5L826.7 537.6L827.2 455.0L827.6 540.3L828.4 440.8L828.6 528.5L829.0 547.7L829.5 528.4L829.9 526.9L830.4 439.6L830.9 461.7L831.5 533.1L831.8 552.4L832.1 549.7L832.6 533.2L833.2 534.8L833.7 464.5L834.3 460.7L834.6 452.5L835.1 531.7L835.6 551.3L836.1 527.0L836.6 532.4L837.0 539.6L837.7 538.0L838.0 443.7L838.4 459.2L838.9 543.1L839.6 528.3L840.2 533.3L840.4 545.4L840.8 544.9L841.4 545.9L841.6 528.7L841.9 549.9L842.6 543.0L842.9 464.9L843.5 527.2L843.9 547.1L844.6 540.9L845.0 538.7L845.5 451.7L846.2 452.8L846.6 532.7L847.1 526.9L847.8 448.5L848.1 544.4L848.8 536.2L849.3 441.8L849.9 462.0L850.3 442.6L850.8 545.3L851.4 549.3L851.9 539.1L852.0 543.2L852.7 554.3L853.3 526.0L853.6 545.9L854.1 544.2L854.7 530.2L855.1 544.0L855.7 541.9L856.2 528.1L856.6 532.0L856.8 527.1L857.4 526.7L858.1 534.3L858.6 547.9L859.3 526.5L859.3 548.0L860.3 530.9L860.6 525.6L861.0 440.7L861.8 525.8L862.3 548.2L862.6 525.9L863.3 529.1L863.8 538.8L864.0 547.7L864.5 542.3L865.4 532.1L865.6 542.8L866.3 527.6L866.7 554.4L866.9 548.8L867.6 541.3L868.1 538.0L868.8 543.7L869.2 534.1L869.9 548.5L870.4 549.8L871.1 451.8L871.6 533.6L872.2 534.5L872.7 527.6L873.0 546.4L873.7 547.0L874.2 544.8L874.7 451.9L875.0 457.3L875.7 453.7L875.8 531.0L876.4 443.0L877.1 546.7L877.5 532.7L878.0 541.0L878.2 539.6L878.5 544.8L879.3 528.2L879.8 526.5L881.0 532.2L882.6 439.1L884.4 447.3L887.0 489.7L888.8 551.1L890.5 439.1L893.0 442.4L896.7 459.7L898.0 448.9L918.7 448.9L919.0 547.8L922.0 544.2L935.4 544.2L936.0 531.2L947.7 531.2L948.5 458.1L950.0 445.7L966.0 444.0L968.0 439.1L970.0 439.1L970.5 535.4L972.0 531.2L1001.0 531.2L1005.0 528.9L1008.0 526.0L1011.0 529.5L1014.0 528.9L1019.0 528.2L1034.7 528.2L1035.6 532.5L1066.0 532.5L1067.0 531.2L1220.0 531.2L1221.0 444.7L1222.0 465.2L1224.0 462.0L1226.7 466.9L1227.5 538.7L1228.0 527.4L1228.5 527.8L1229.1 527.0L1229.6 541.8L1230.2 540.2L1230.7 523.2L1231.3 537.7L1231.8 532.0L1232.4 535.7L1232.9 529.3L1233.5 545.1L1234.0 527.3L1234.6 525.0L1235.1 529.8L1235.7 537.4L1236.2 529.8L1236.8 540.5L1237.3 528.1L1237.9 527.5L1238.4 532.0L1239.0 528.5L1239.5 529.8L1240.1 528.1L1240.6 525.2L1241.2 528.4L1241.7 525.0L1242.3 529.4L1242.8 543.4L1243.4 540.8L1243.9 525.0L1244.5 543.2L1245.0 525.9L1245.6 529.3L1246.1 542.1L1246.7 525.5L1247.2 529.3L1247.8 540.4L1248.3 537.6L1248.9 530.1L1249.4 531.3L1250.0 532.3L1250.5 526.3L1251.1 538.1L1251.6 526.2L1252.2 523.8L1252.7 526.3L1253.3 535.5L1253.8 539.8L1254.4 534.1L1254.9 536.4L1255.5 530.4L1256.0 543.2L1256.6 538.7L1257.1 543.2L1257.7 542.5L1258.2 538.3L1258.8 533.2L1259.3 527.6L1259.9 536.9L1260.4 525.5L1261.0 534.2L1261.5 524.0L1262.1 537.8L1262.6 538.0L1263.2 541.6L1263.7 527.7L1264.3 532.1L1264.8 524.1L1265.4 534.2L1265.9 528.2L1266.5 541.6L1267.0 524.5L1267.6 543.6L1268.1 541.0L1268.7 523.2L1269.2 543.6L1269.8 523.9L1270.3 523.2L1270.9 543.8L1271.4 535.9L1272.0 527.6L1272.5 523.7L1273.1 533.2L1273.6 525.1L1274.2 535.8L1274.7 528.6L1275.3 543.7L1275.8 530.6L1276.4 540.5L1276.9 529.2L1277.5 538.9L1278.0 544.6L1278.6 535.2L1279.1 540.1L1279.7 534.0L1280.2 545.1L1280.8 535.6L1281.3 540.3L1281.9 537.2L1282.4 531.7L1283.0 528.8L1283.5 534.5L1284.1 535.7L1284.6 538.8L1285.2 531.7L1285.7 528.8L1286.3 539.9L1286.8 542.4L1287.4 529.6L1287.9 539.3L1288.5 528.4L1289.0 532.9L1289.6 543.2L1290.1 537.6L1290.7 524.5L1291.2 526.7L1291.8 530.7L1292.3 523.1L1292.9 523.2L1293.4 527.8L1294.0 525.8L1294.5 534.1L1295.1 525.4L1295.6 538.9L1296.2 524.3L1296.7 523.4L1297.3 527.0L1297.8 523.9L1298.4 530.1L1298.9 530.1L1299.5 542.7L1300.0 529.1L1300.6 543.3L1301.1 525.2L1301.7 527.3L1302.2 525.8L1302.8 528.8L1303.3 539.0L1303.9 531.8L1304.4 534.4L1305.0 525.8L1305.5 531.9L1306.1 536.1L1306.6 529.3L1307.2 527.9L1307.7 531.1L1308.3 537.0L1308.8 530.4L1309.4 532.5L1309.9 542.9L1310.5 539.2L1311.0 542.0L1311.6 533.8L1312.1 542.7L1312.7 528.2L1313.2 532.1L1313.8 542.2L1314.3 529.6L1314.9 527.8L1315.4 544.5L1316.0 528.9L1316.5 534.7L1317.1 525.3L1317.6 524.9L1318.2 531.5L1318.7 527.5L1319.3 541.1L1319.8 528.8L1320.4 529.7L1320.9 528.6L1321.5 535.2L1322.0 540.0L1322.6 536.8L1323.1 541.5L1323.7 530.5L1324.2 530.1L1324.8 531.4L1325.3 527.7L1325.9 538.8L1326.4 531.7L1327.0 527.5L1327.5 531.2L1328.1 541.3L1328.6 538.9L1329.2 538.3L1329.7 538.3L1330.3 530.0L1330.8 536.8L1331.4 540.6L1331.9 524.2L1332.5 532.3L1333.0 525.0L1333.6 535.7L1334.1 542.6L1334.7 543.6L1335.2 525.0L1335.8 544.6L1336.3 543.5L1336.9 531.9L1337.4 536.1L1338.0 544.3L1338.5 537.6L1339.1 532.2L1339.6 541.6L1340.2 536.9L1340.7 539.8L1341.3 534.0L1341.8 525.5L1342.4 532.1L1342.9 528.4L1343.5 527.1L1344.0 544.9L1344.6 543.0L1345.1 527.0L1345.7 534.3L1346.2 536.0L1346.8 526.1L1347.3 539.6L1347.9 534.6L1348.4 527.5L1349.0 529.5L1349.5 543.7L1350.1 539.4L1350.6 526.1L1351.2 531.6L1351.7 536.4L1352.3 525.3L1352.8 533.5L1353.4 525.7L1353.9 539.2L1354.5 531.6L1355.0 536.8L1355.6 545.1L1356.1 530.6L1356.7 533.8L1357.2 538.0L1357.8 538.2L1358.3 536.0L1358.9 531.2L1359.4 523.7L1360.0 529.1L1360.5 524.3L1361.1 538.5L1361.6 544.6L1362.2 541.8L1362.7 526.6L1363.3 543.0L1363.8 528.4L1364.4 523.2L1364.9 527.7L1365.5 534.3L1366.0 540.7L1366.6 526.6L1367.1 541.0L1367.7 545.1L1368.2 534.6L1368.8 524.7L1369.3 523.1L1369.9 533.8L1370.4 544.3L1371.0 534.9L1371.5 535.5L1372.1 530.7L1372.6 536.8L1373.2 536.2L1373.7 526.2L1374.3 527.5L1374.8 539.7L1375.4 533.1L1375.9 544.2L1376.5 534.1L1377.0 544.9L1377.6 531.2L1378.1 536.6L1378.7 524.5L1379.2 534.0L1379.8 541.5L1380.3 528.4L1380.9 536.5L1381.4 532.9L1382.0 529.1L1382.5 536.3L1383.1 533.5L1383.6 544.1L1384.2 538.4L1384.7 543.6L1385.3 534.2L1385.8 534.5L1386.4 540.5L1386.9 537.2L1387.5 545.0L1388.0 524.2L1388.6 526.0L1389.1 538.3L1389.7 523.2L1390.2 529.0L1390.8 533.9L1391.3 538.4L1391.9 529.6L1392.4 526.8L1393.0 527.7L1393.5 535.2L1394.1 525.8L1394.6 540.4L1395.2 527.6L1395.7 523.4L1396.3 544.3L1396.8 541.5L1397.4 530.2L1397.9 530.2L1398.5 542.1L1399.0 544.7L1399.6 524.6L1400.1 523.3L1400.7 525.0L1401.2 543.8L1401.8 528.7L1402.3 535.3L1402.9 537.0L1403.4 538.5L1404.0 529.4L1404.5 536.4L1405.1 541.5L1405.6 544.5L1406.2 544.1L1406.7 535.8L1407.3 529.1L1407.8 532.5L1408.4 523.8L1408.9 525.6L1409.5 525.4L1410.0 533.2L1410.6 533.8L1411.1 529.8L1411.7 531.1L1412.2 541.3L1412.8 533.1L1413.3 535.1L1413.9 534.2L1414.4 534.4L1415.0 533.9L1415.5 531.8L1416.1 538.3L1416.6 541.8L1417.2 523.1L1417.7 528.5L1418.3 539.0L1418.8 526.8L1419.4 527.8L1419.9 537.9L1420.5 538.9L1421.0 540.9L1421.6 544.8L1422.1 539.7L1422.7 525.0L1423.2 523.7L1423.8 531.2L1424.3 523.6L1424.9 544.1L1425.4 533.1L1426.0 523.7L1426.5 539.4L1427.1 544.7L1427.6 524.5L1428.2 531.7L1428.7 524.5L1429.3 543.4L1429.8 526.8L1430.4 532.2L1430.9 526.0L1431.5 538.2L1432.0 544.6L1432.6 531.2L1433.1 537.6L1433.7 541.7L1434.2 541.8L1434.8 543.2L1435.3 531.7L1435.9 528.0L1436.4 543.2L1437.0 541.0L1437.5 526.9L1438.1 539.8L1438.6 532.2L1439.2 541.0L1439.7 527.1L1440.3 531.7L1440.8 538.2L1441.4 534.9L1441.9 530.6L1442.5 536.2L1443.0 537.6L1443.6 534.2L1444.1 539.1L1444.7 538.6L1445.2 537.8L1445.8 535.4L1446.3 528.7L1446.9 527.7L1447.4 534.2L1448.0 529.7L1448.5 528.6L1449.1 526.6L1449.6 536.4L1450.2 530.2L1450.7 527.6L1451.3 529.6L1451.8 538.8L1452.4 528.4L1452.9 529.3L1453.5 531.5L1454.0 538.8L1454.6 538.3L1455.1 539.2L1455.7 532.1L1456.2 531.5L1456.8 538.0L1457.3 528.4L1457.9 534.0L1458.4 537.5L1459.0 531.7L1459.5 535.9L1460.1 536.5L1460.6 536.6L1461.2 529.0L1461.7 538.0L1462.3 536.2L1462.8 537.5L1463.4 530.6L1463.9 530.5L1464.5 533.7L1465.0 537.3L1465.6 539.1L1466.1 527.2L1466.7 531.5L1467.2 538.5L1467.8 531.0L1468.3 528.5L1468.9 536.7L1469.4 527.0L1470.0 537.1L1470.5 533.6L1471.1 533.6L1471.6 526.8L1472.2 533.1L1472.7 529.7L1473.3 529.9L1473.8 535.6L1474.4 533.3L1474.9 533.3L1475.5 535.0L1476.0 536.8L1476.6 537.2L1477.1 526.4L1477.7 527.2L1478.2 537.2L1478.8 526.4L1479.3 534.9L1479.9 529.4L1480.4 533.2L1481.0 533.2L1481.5 533.8L1482.1 538.9L1482.6 532.5L1483.2 536.0L1483.7 527.3L1484.3 531.1L1484.8 535.7L1485.4 528.4L1485.9 531.7L1486.5 531.0L1487.0 529.7L1487.6 529.8L1488.1 536.5L1488.7 528.0L1489.2 529.6L1489.8 529.4L1490.3 529.6L1490.9 536.3L1491.4 526.5L1492.0 529.8L1492.5 527.4L1493.1 535.6L1493.6 535.3L1494.2 527.8L1494.7 526.3L1495.3 530.2L1495.8 537.4L1496.4 535.6L1496.9 532.2L1497.5 539.2L1498.0 534.9L1498.6 531.9L1499.1 527.2L1499.7 530.3L1500.2 529.9L1500.8 536.1L1501.3 530.1L1501.9 536.0L1502.4 535.7L1503.0 532.0L1503.5 535.8L1504.1 537.9L1504.6 531.6L1505.2 537.4L1505.7 532.2L1506.3 537.1L1506.8 533.4L1507.4 529.8L1507.9 534.2L1508.5 536.2L1509.0 529.9L1509.6 529.6L1510.1 533.7L1510.7 531.3L1511.2 535.8L1511.8 537.8L1512.3 536.0L1512.9 532.6L1513.4 530.9L1514.0 536.7L1514.5 536.7L1515.1 535.3L1515.6 535.7L1516.2 534.8L1516.7 531.2L1517.3 534.7L1517.8 531.2L1518.4 532.1L1518.9 529.7L1519.5 532.6L1520.0 529.1L1520.6 534.6L1521.1 533.0L1521.7 536.2L1522.2 536.2L1522.8 534.8L1523.3 530.2L1523.9 529.8L1524.4 533.9L1525.0 534.8L1525.5 535.0L1526.1 532.9L1526.6 533.8L1527.2 529.0L1527.7 531.7L1528.3 534.7L1528.8 532.9L1529.4 533.8L1529.9 529.3L1530.5 536.3L1531.0 530.7L1531.6 535.4L1532.1 534.4L1532.7 537.7L1533.2 535.7L1533.8 535.1L1534.3 535.6L1534.9 532.2L1535.4 536.9L1536.0 535.2L1536.5 533.1L1537.1 533.2L1537.6 532.7L1538.2 536.4L1538.7 535.6L1539.3 531.0L1539.8 529.0L1540.4 536.5L1540.9 537.2L1541.5 530.0L1542.0 528.9L1542.6 534.3L1543.1 529.2L1543.7 532.6L1544.2 529.8L1544.8 537.6L1545.3 537.8L1545.9 530.4L1546.4 533.8L1547.0 537.0L1547.5 531.0L1548.1 538.0L1548.6 536.3L1549.2 531.2L1549.7 531.2L1550.3 533.3L1550.8 532.5L1551.4 532.6L1551.9 535.7L1552.5 534.8L1553.0 532.3L1553.6 535.9L1554.1 530.8L1554.7 529.6L1555.2 532.3L1555.8 536.5L1556.3 535.4L1556.9 532.6L1557.4 534.0L1558.0 534.4L1558.5 537.9L1559.1 534.5L1559.6 534.6L1560.2 537.0L1560.7 529.0L1561.3 531.0L1561.8 529.2L1562.4 535.8L1562.9 531.8L1563.5 531.5L1564.0 535.8L1564.6 532.6L1565.1 531.4L1565.7 532.6L1566.2 533.0L1566.8 535.7L1567.3 535.6L1567.9 535.1L1568.4 533.5L1569.0 534.2L1569.5 536.1L1570.1 537.5L1570.6 529.0L1571.2 534.8L1571.7 529.9L1572.3 529.8L1572.8 536.5L1573.4 536.3L1573.9 535.9L1574.5 538.0L1575.0 536.0L1575.6 532.4L1576.1 531.6L1576.7 536.4L1577.2 533.2L1577.8 532.2L1578.5 535.4L1620.5 535.4L1621.0 532.2L1670.6 532.2L1671.0 527.3L1672.0 536.4L1674.0 534.8L1675.0 527.3L1676.6 527.3L1677.0 547.8L1716.0 547.8L1717.0 540.3L1763.6 540.3L1766.0 544.6L1767.5 545.2L1769.0 439.8L1771.0 552.4L1772.0 528.4L1772.5 529.2L1773.1 527.8L1773.6 540.9L1774.2 540.1L1774.7 528.4L1775.3 533.8L1775.8 528.7L1776.4 528.4L1776.9 527.5L1777.5 528.6L1778.0 534.3L1778.6 524.9L1779.1 529.5L1779.7 533.2L1780.2 526.5L1780.8 535.9L1781.3 535.8L1781.9 531.0L1782.4 523.4L1783.0 538.9L1783.5 536.9L1784.1 540.6L1784.6 529.9L1785.2 533.3L1785.7 533.2L1786.3 535.6L1786.8 535.4L1787.4 531.2L1787.9 539.5L1788.5 533.2L1789.0 539.7L1789.6 532.6L1790.1 532.9L1790.7 534.5L1791.2 536.4L1791.8 526.9L1792.3 538.0L1792.9 532.3L1793.4 523.7L1794.0 535.4L1794.5 534.4L1795.1 529.2L1795.6 532.9L1796.2 527.3L1796.7 525.2L1797.3 538.0L1797.8 532.8L1798.4 533.3L1798.9 533.6L1799.5 530.1L1800.0 538.8L1800.6 537.1L1801.1 537.8L1801.7 534.1L1802.2 536.4L1802.8 536.7L1803.3 524.1L1803.9 530.5L1804.4 536.4L1805.0 540.7" stroke="#f8f800" stroke-width="1.45" fill="none" stroke-linejoin="miter" stroke-miterlimit="2"/>
<path d="M1231.2 535.4L1232.0 514.2L1232.8 535.4M1271.6 535.4L1272.4 501.1L1273.2 535.4M1321.7 535.4L1322.5 506.7L1323.3 535.4M1396.2 535.4L1397.0 519.1L1397.8 535.4" stroke="#f0f000" stroke-width="1.4" fill="none" stroke-miterlimit="2"/>
<rect x="135" y="951.5" width="1660" height="2.5" fill="#ff0000"/>
<path d="M136.0 806.2L137.2 809.6L138.4 811.4L139.6 811.4L140.8 811.4L142.0 816.6L143.2 816.6L144.4 816.6L145.6 818.3L146.8 818.3L148.0 818.3L149.2 821.8L150.4 823.5L151.6 823.5L152.8 826.9L154.0 825.2L155.2 826.9L156.4 826.9L157.6 832.1L158.8 832.1L160.0 833.9L161.2 833.9L162.4 832.1L163.6 835.6L164.8 837.3L166.0 837.3L167.2 840.8L168.4 840.8L169.6 840.8L170.8 844.2L172.0 842.5L173.2 847.7L174.4 846.0L175.6 846.0L176.8 844.2L178.0 842.5L179.2 839.0L180.4 837.3L181.6 839.0L182.8 833.9L184.0 835.6L185.2 830.4L186.4 830.4L187.6 825.2L188.8 821.8L190.0 818.3L191.2 814.8L192.4 814.8L193.6 811.4L194.8 811.4L196.0 811.4L197.2 807.9L198.4 809.6L199.6 809.6L200.8 807.9L202.0 809.6L203.2 809.6L204.4 809.6L205.6 813.1L206.8 811.4L208.0 813.1L209.2 816.6L210.4 821.8L211.6 825.2L212.8 826.9L214.0 828.7L215.2 830.4L216.4 833.9L217.6 833.9L218.8 837.3L220.0 839.0L221.2 842.5L222.4 840.8L223.6 835.6L224.8 832.1L226.0 830.4L227.2 828.7L228.4 828.7L229.6 826.9L230.8 826.9L232.0 825.2L233.2 828.7L234.4 828.7L235.6 826.9L236.8 828.7L238.0 826.9L239.2 828.7L240.4 828.7L241.6 825.2L242.8 828.7L244.0 828.7L245.2 828.7L246.4 830.4L247.6 830.4L248.8 830.4L250.0 832.1L251.2 835.6L252.4 832.1L253.6 832.1L254.8 833.9L256.0 833.9L257.2 830.4L258.4 832.1L259.6 826.9L260.8 826.9L262.0 826.9L263.2 826.9L264.4 825.2L265.6 823.5L266.8 823.5L268.0 826.9L269.2 825.2L270.4 823.5L271.6 821.8L272.8 821.8L274.0 823.5L275.2 821.8L276.4 821.8L277.6 818.3L278.8 818.3L280.0 820.0L281.2 820.0L282.4 820.0L283.6 820.0L284.8 820.0L286.0 821.8L287.2 825.2L288.4 823.5L289.6 825.2L290.8 825.2L292.0 828.7L293.2 825.2L294.4 826.9L295.6 828.7L296.8 823.5L298.0 826.9L299.2 826.9L300.4 826.9L301.6 826.9L302.8 825.2L304.0 825.2L305.2 826.9L306.4 826.9L307.6 823.5L308.8 823.5L310.0 821.8L311.2 820.0L312.4 821.8L313.6 818.3L314.8 821.8L316.0 818.3L317.2 814.8L318.4 816.6L319.6 814.8L320.8 814.8L322.0 811.4L323.2 811.4L324.4 809.6L325.6 809.6L326.8 811.4L328.0 809.6L329.2 806.2L330.4 809.6L331.6 809.6L332.8 807.9L334.0 807.9L335.2 802.7L336.4 804.5L337.6 802.7L338.8 804.5L340.0 801.0L341.2 802.7L342.4 799.3L343.6 801.0L344.8 799.3L346.0 797.5L347.2 799.3L348.4 799.3L349.6 801.0L350.8 797.5L352.0 797.5L353.2 797.5L354.4 799.3L355.6 795.8L356.8 795.8L358.0 792.3L359.2 792.3L360.4 790.6L361.6 785.4L362.8 785.4L364.0 782.0L365.2 780.2L366.4 775.0L367.6 776.8L368.8 775.0L370.0 769.9L371.2 768.1L372.4 768.1L373.6 764.7L374.8 762.9L376.0 761.2L377.2 764.7L378.4 762.9L379.6 761.2L380.8 761.2L382.0 757.7L383.2 759.5L384.4 757.7L385.6 756.0L386.8 754.3L388.0 754.3L389.2 752.5L390.4 750.8L391.6 750.8L392.8 749.1L394.0 750.8L395.2 750.8L396.4 749.1L397.6 747.4L398.8 745.6L400.0 745.6L401.2 745.6L402.4 745.6L403.6 745.6L404.8 742.2L406.0 742.2L407.2 742.2L408.4 742.2L409.6 743.9L410.8 742.2L412.0 740.4L413.2 740.4L414.4 738.7L415.6 738.7L416.8 737.0L418.0 735.2L419.2 733.5L420.4 735.2L421.6 731.8L422.8 731.8L424.0 731.8L425.2 731.8L426.4 730.1L427.6 724.9L428.8 724.9L430.0 724.9L431.2 723.1L432.4 721.4L433.6 723.1L434.8 719.7L436.0 719.7L437.2 721.4L438.4 719.7L439.6 718.0L440.8 716.2L442.0 719.7L443.2 718.0L444.4 716.2L445.6 716.2L446.8 718.0L448.0 718.0L449.2 716.2L450.4 718.0L451.6 714.5L452.8 714.5L454.0 716.2L455.2 714.5L456.4 716.2L457.6 712.8L458.8 714.5L460.0 712.8L461.2 712.8L462.4 716.2L463.6 712.8L464.8 712.8L466.0 712.8L467.2 711.0L468.4 711.0L469.6 711.0L470.8 711.0L472.0 711.0L473.2 712.8L474.4 709.3L475.6 712.8L476.8 712.8L478.0 711.0L479.2 707.6L480.4 711.0L481.6 707.6L482.8 711.0L484.0 711.0L485.2 707.6L486.4 707.6L487.6 709.3L488.8 707.6L490.0 707.6L491.2 707.6L492.4 709.3L493.6 707.6L494.8 705.8L496.0 707.6L497.2 707.6L498.4 707.6L499.6 704.1L500.8 704.1L502.0 705.8L503.2 705.8L504.4 704.1L505.6 705.8L506.8 705.8L508.0 705.8L509.2 705.8L510.4 702.4L511.6 704.1L512.8 702.4L514.0 705.8L515.2 704.1L516.4 704.1L517.6 700.6L518.8 700.6L520.0 704.1L521.2 702.4L522.4 702.4L523.6 700.6L524.8 700.6L526.0 698.9L527.2 697.2L528.4 697.2L529.6 697.2L530.8 697.2L532.0 698.9L533.2 693.7L534.4 693.7L535.6 695.5L536.8 695.5L538.0 692.0L539.2 692.0L540.4 690.3L541.6 690.3L542.8 692.0L544.0 692.0L545.2 692.0L546.4 688.5L547.6 688.5L548.8 692.0L550.0 690.3L551.2 688.5L552.4 690.3L553.6 690.3L554.8 688.5L556.0 686.8L557.2 690.3L558.4 686.8L559.6 686.8L560.8 686.8L562.0 688.5L563.2 688.5L564.4 686.8L565.6 688.5L566.8 686.8L568.0 685.1L569.2 688.5L570.4 688.5L571.6 688.5L572.8 686.8L574.0 685.1L575.2 686.8L576.4 686.8L577.6 685.1L578.8 686.8L580.0 686.8L581.2 683.4L582.4 686.8L583.6 686.8L584.8 685.1L586.0 681.6L587.2 683.4L588.4 683.4L589.6 683.4L590.8 683.4L592.0 683.4L593.2 679.9L594.4 683.4L595.6 681.6L596.8 683.4L598.0 679.9L599.2 683.4L600.4 681.6L601.6 681.6L602.8 681.6L604.0 681.6L605.2 679.9L606.4 678.2L607.6 679.9L608.8 678.2L610.0 679.9L611.2 681.6L612.4 679.9L613.6 678.2L614.8 678.2L616.0 679.9L617.2 679.9L618.4 678.2L619.6 679.9L620.8 678.2L622.0 678.2L623.2 681.6L624.4 679.9L625.6 681.6L626.8 679.9L628.0 678.2L629.2 678.2L630.4 678.2L631.6 679.9L632.8 679.9L634.0 679.9L635.2 679.9L636.4 678.2L637.6 678.2L638.8 678.2L640.0 678.2L641.2 679.9L642.4 681.6L643.6 683.4L644.8 683.4L646.0 688.5L647.2 690.3L648.4 692.0L649.6 693.7L650.8 695.5L652.0 700.6L653.2 700.6L654.4 704.1L655.6 704.1L656.8 711.0L658.0 714.5L659.2 716.2L660.4 721.4L661.6 721.4L662.8 724.9L664.0 730.1L665.2 733.5L666.4 735.2L667.6 735.2L668.8 740.4L670.0 745.6L671.2 745.6L672.4 749.1L673.6 752.5L674.8 756.0L676.0 759.5L677.2 768.1L678.4 775.0L679.6 782.0L680.8 788.9L682.0 792.3L683.2 797.5L684.4 801.0L685.6 804.5L686.8 804.5L688.0 807.9L689.2 809.6L690.4 807.9L691.6 809.6L692.8 811.4L694.0 809.6L695.2 811.4L696.4 809.6L697.6 809.6L698.8 807.9L700.0 807.9L701.2 807.9L702.4 809.6L703.6 811.4L704.8 809.6L706.0 811.4L707.2 809.6L708.4 811.4L709.6 811.4L710.8 809.6L712.0 809.6L713.2 809.6L714.4 813.1L715.6 811.4L716.8 811.4L718.0 814.8L719.2 813.1L720.4 811.4L721.6 814.8L722.8 814.8L724.0 813.1L725.2 814.8L726.4 816.6L727.6 814.8L728.8 814.8L730.0 814.8L731.2 813.1L732.4 813.1L733.6 814.8L734.8 814.8L736.0 813.1L737.2 813.1L738.4 813.1L739.6 814.8L740.8 811.4L742.0 814.8L743.2 814.8L744.4 814.8L745.6 816.6L746.8 816.6L748.0 814.8L749.2 818.3L750.4 816.6L751.6 820.0L752.8 818.3L754.0 818.3L755.2 818.3L756.4 818.3L757.6 820.0L758.8 820.0L760.0 823.5L761.2 823.5L762.4 821.8L763.6 821.8L764.8 823.5L766.0 820.0L767.2 821.8L768.4 823.5L769.6 820.0L770.8 821.8L772.0 821.8L773.2 820.0L774.4 820.0L775.6 821.8L776.8 818.3L778.0 820.0L779.2 821.8L780.4 821.8L781.6 820.0L782.8 821.8L784.0 820.0L785.2 821.8L786.4 823.5L787.6 826.9L788.8 825.2L790.0 826.9L791.2 823.5L792.4 826.9L793.6 828.7L794.8 828.7L796.0 826.9L797.2 825.2L798.4 828.7L799.6 825.2L800.8 830.4L802.0 828.7L803.2 828.7L804.4 828.7L805.6 826.9L806.8 828.7L808.0 830.4L809.2 830.4L810.4 828.7L811.6 832.1L812.8 828.7L814.0 830.4L815.2 828.7L816.4 830.4L817.6 833.9L818.8 833.9L820.0 830.4L821.2 832.1L822.4 832.1L823.6 833.9L824.8 833.9L826.0 833.9L827.2 833.9L828.4 837.3L829.6 835.6L830.8 837.3L832.0 837.3L833.2 837.3L834.4 837.3L835.6 835.6L836.8 835.6L838.0 835.6L839.2 835.6L840.4 835.6L841.6 833.9L842.8 837.3L844.0 835.6L845.2 833.9L846.4 833.9L847.6 833.9L848.8 837.3L850.0 833.9L851.2 835.6L852.4 833.9L853.6 835.6L854.8 833.9L856.0 835.6L857.2 833.9L858.4 832.1L859.6 832.1L860.8 832.1L862.0 832.1L863.2 832.1L864.4 830.4L865.6 828.7L866.8 832.1L868.0 830.4L869.2 826.9L870.4 828.7L871.6 828.7L872.8 826.9L874.0 828.7L875.2 826.9L876.4 823.5L877.6 825.2L878.8 821.8L880.0 821.8L881.2 823.5L882.4 820.0L883.6 820.0L884.8 820.0L886.0 818.3L887.2 816.6L888.4 818.3L889.6 816.6L890.8 816.6L892.0 816.6L893.2 814.8L894.4 814.8L895.6 813.1L896.8 813.1L898.0 809.6L899.2 809.6L900.4 807.9L901.6 807.9L902.8 806.2L904.0 804.5L905.2 804.5L906.4 801.0L907.6 799.3L908.8 799.3L910.0 797.5L911.2 795.8L912.4 795.8L913.6 795.8L914.8 795.8L916.0 792.3L917.2 794.1L918.4 790.6L919.6 790.6L920.8 788.9L922.0 788.9L923.2 788.9L924.4 787.1L925.6 785.4L926.8 785.4L928.0 780.2L929.2 780.2L930.4 780.2L931.6 778.5L932.8 778.5L934.0 773.3L935.2 773.3L936.4 769.9L937.6 769.9L938.8 769.9L940.0 764.7L941.2 764.7L942.4 766.4L943.6 762.9L944.8 762.9L946.0 762.9L947.2 759.5L948.4 761.2L949.6 756.0L950.8 756.0L952.0 754.3L953.2 754.3L954.4 752.5L955.6 750.8L956.8 754.3L958.0 749.1L959.2 750.8L960.4 749.1L961.6 749.1L962.8 749.1L964.0 747.4L965.2 743.9L966.4 745.6L967.6 742.2L968.8 743.9L970.0 740.4L971.2 738.7L972.4 738.7L973.6 738.7L974.8 738.7L976.0 738.7L977.2 737.0L978.4 737.0L979.6 733.5L980.8 733.5L982.0 731.8L983.2 731.8L984.4 733.5L985.6 733.5L986.8 728.3L988.0 731.8L989.2 730.1L990.4 728.3L991.6 728.3L992.8 728.3L994.0 724.9L995.2 724.9L996.4 726.6L997.6 724.9L998.8 724.9L1000.0 719.7L1001.2 723.1L1002.4 721.4L1003.6 721.4L1004.8 718.0L1006.0 719.7L1007.2 718.0L1008.4 719.7L1009.6 718.0L1010.8 714.5L1012.0 716.2L1013.2 714.5L1014.4 716.2L1015.6 716.2L1016.8 712.8L1018.0 716.2L1019.2 716.2L1020.4 712.8L1021.6 712.8L1022.8 711.0L1024.0 711.0L1025.2 709.3L1026.4 709.3L1027.6 709.3L1028.8 705.8L1030.0 705.8L1031.2 707.6L1032.4 704.1L1033.6 702.4L1034.8 705.8L1036.0 702.4L1037.2 702.4L1038.4 700.6L1039.6 700.6L1040.8 698.9L1042.0 700.6L1043.2 697.2L1044.4 697.2L1045.6 695.5L1046.8 693.7L1048.0 693.7L1049.2 692.0L1050.4 692.0L1051.6 690.3L1052.8 692.0L1054.0 690.3L1055.2 688.5L1056.4 688.5L1057.6 688.5L1058.8 685.1L1060.0 685.1L1061.2 685.1L1062.4 683.4L1063.6 685.1L1064.8 683.4L1066.0 685.1L1067.2 681.6L1068.4 681.6L1069.6 683.4L1070.8 679.9L1072.0 681.6L1073.2 678.2L1074.4 679.9L1075.6 678.2L1076.8 679.9L1078.0 676.4L1079.2 676.4L1080.4 674.7L1081.6 674.7L1082.8 676.4L1084.0 674.7L1085.2 674.7L1086.4 671.2L1087.6 673.0L1088.8 674.7L1090.0 671.2L1091.2 671.2L1092.4 671.2L1093.6 671.2L1094.8 669.5L1096.0 671.2L1097.2 669.5L1098.4 667.8L1099.6 667.8L1100.8 666.0L1102.0 667.8L1103.2 667.8L1104.4 664.3L1105.6 666.0L1106.8 666.0L1108.0 662.6L1109.2 664.3L1110.4 664.3L1111.6 664.3L1112.8 666.0L1114.0 667.8L1115.2 666.0L1116.4 666.0L1117.6 666.0L1118.8 664.3L1120.0 664.3L1121.2 666.0L1122.4 662.6L1123.6 662.6L1124.8 662.6L1126.0 662.6L1127.2 662.6L1128.4 660.9L1129.6 662.6L1130.8 664.3L1132.0 660.9L1133.2 659.1L1134.4 660.9L1135.6 662.6L1136.8 659.1L1138.0 660.9L1139.2 659.1L1140.4 659.1L1141.6 660.9L1142.8 659.1L1144.0 657.4L1145.2 660.9L1146.4 659.1L1147.6 657.4L1148.8 659.1L1150.0 657.4L1151.2 655.7L1152.4 655.7L1153.6 657.4L1154.8 655.7L1156.0 653.9L1157.2 653.9L1158.4 653.9L1159.6 655.7L1160.8 655.7L1162.0 653.9L1163.2 653.9L1164.4 657.4L1165.6 653.9L1166.8 655.7L1168.0 652.2L1169.2 653.9L1170.4 652.2L1171.6 652.2L1172.8 652.2L1174.0 652.2L1175.2 652.2L1176.4 653.9L1177.6 652.2L1178.8 653.9L1180.0 652.2L1181.2 650.5L1182.4 652.2L1183.6 650.5L1184.8 650.5L1186.0 650.5L1187.2 647.0L1188.4 645.3L1189.6 645.3L1190.8 645.3L1192.0 643.6L1193.2 641.8L1194.4 641.8L1195.6 645.3L1196.8 648.8L1198.0 650.5L1199.2 653.9L1200.4 657.4L1201.6 657.4L1202.8 662.6L1204.0 662.6L1205.2 667.8L1206.4 671.2L1207.6 671.2L1208.8 676.4L1210.0 678.2L1211.2 683.4L1212.4 685.1L1213.6 688.5L1214.8 692.0L1216.0 695.5L1217.2 697.2L1218.4 702.4L1219.6 711.0L1220.8 718.0L1222.0 719.7L1223.2 737.0L1224.4 759.5L1225.6 775.0L1226.8 787.1L1228.0 801.0L1229.2 806.2L1230.4 804.5L1231.6 807.9L1232.8 811.4L1234.0 814.8L1235.2 818.3L1236.4 818.3L1237.6 820.0L1238.8 821.8L1240.0 820.0L1241.2 820.0L1242.4 820.0L1243.6 823.5L1244.8 821.8L1246.0 823.5L1247.2 825.2L1248.4 821.8L1249.6 823.5L1250.8 823.5L1252.0 825.2L1253.2 823.5L1254.4 823.5L1255.6 826.9L1256.8 826.9L1258.0 825.2L1259.2 828.7L1260.4 826.9L1261.6 830.4L1262.8 830.4L1264.0 828.7L1265.2 828.7L1266.4 828.7L1267.6 830.4L1268.8 830.4L1270.0 830.4L1271.2 833.9L1272.4 832.1L1273.6 833.9L1274.8 835.6L1276.0 835.6L1277.2 835.6L1278.4 837.3L1279.6 835.6L1280.8 835.6L1282.0 837.3L1283.2 837.3L1284.4 840.8L1285.6 840.8L1286.8 840.8L1288.0 842.5L1289.2 839.0L1290.4 840.8L1291.6 840.8L1292.8 842.5L1294.0 842.5L1295.2 842.5L1296.4 844.2L1297.6 842.5L1298.8 844.2L1300.0 842.5L1301.2 846.0L1302.4 844.2L1303.6 846.0L1304.8 844.2L1306.0 846.0L1307.2 846.0L1308.4 847.7L1309.6 846.0L1310.8 846.0L1312.0 847.7L1313.2 844.2L1314.4 847.7L1315.6 846.0L1316.8 849.4L1318.0 846.0L1319.2 849.4L1320.4 847.7L1321.6 846.0L1322.8 847.7L1324.0 851.2L1325.2 849.4L1326.4 849.4L1327.6 851.2L1328.8 852.9L1330.0 849.4L1331.2 852.9L1332.4 852.9L1333.6 852.9L1334.8 851.2L1336.0 852.9L1337.2 854.6L1338.4 851.2L1339.6 852.9L1340.8 852.9L1342.0 854.6L1343.2 851.2L1344.4 852.9L1345.6 851.2L1346.8 851.2L1348.0 852.9L1349.2 852.9L1350.4 852.9L1351.6 854.6L1352.8 851.2L1354.0 852.9L1355.2 852.9L1356.4 851.2L1357.6 854.6L1358.8 851.2L1360.0 851.2L1361.2 851.2L1362.4 852.9L1363.6 852.9L1364.8 851.2L1366.0 854.6L1367.2 852.9L1368.4 851.2L1369.6 854.6L1370.8 854.6L1372.0 851.2L1373.2 854.6L1374.4 851.2L1375.6 852.9L1376.8 852.9L1378.0 854.6L1379.2 851.2L1380.4 851.2L1381.6 851.2L1382.8 852.9L1384.0 849.4L1385.2 852.9L1386.4 849.4L1387.6 851.2L1388.8 852.9L1390.0 849.4L1391.2 849.4L1392.4 849.4L1393.6 849.4L1394.8 849.4L1396.0 849.4L1397.2 847.7L1398.4 847.7L1399.6 846.0L1400.8 847.7L1402.0 847.7L1403.2 849.4L1404.4 846.0L1405.6 847.7L1406.8 846.0L1408.0 846.0L1409.2 847.7L1410.4 846.0L1411.6 844.2L1412.8 844.2L1414.0 842.5L1415.2 846.0L1416.4 842.5L1417.6 840.8L1418.8 842.5L1420.0 844.2L1421.2 844.2L1422.4 840.8L1423.6 839.0L1424.8 842.5L1426.0 839.0L1427.2 837.3L1428.4 837.3L1429.6 839.0L1430.8 839.0L1432.0 835.6L1433.2 835.6L1434.4 837.3L1435.6 835.6L1436.8 833.9L1438.0 835.6L1439.2 833.9L1440.4 833.9L1441.6 833.9L1442.8 833.9L1444.0 832.1L1445.2 833.9L1446.4 832.1L1447.6 832.1L1448.8 830.4L1450.0 830.4L1451.2 828.7L1452.4 826.9L1453.6 828.7L1454.8 828.7L1456.0 828.7L1457.2 826.9L1458.4 825.2L1459.6 826.9L1460.8 825.2L1462.0 826.9L1463.2 821.8L1464.4 823.5L1465.6 823.5L1466.8 825.2L1468.0 823.5L1469.2 823.5L1470.4 821.8L1471.6 821.8L1472.8 821.8L1474.0 821.8L1475.2 818.3L1476.4 820.0L1477.6 818.3L1478.8 818.3L1480.0 816.6L1481.2 820.0L1482.4 816.6L1483.6 818.3L1484.8 816.6L1486.0 816.6L1487.2 818.3L1488.4 818.3L1489.6 814.8L1490.8 816.6L1492.0 814.8L1493.2 816.6L1494.4 813.1L1495.6 813.1L1496.8 813.1L1498.0 816.6L1499.2 814.8L1500.4 814.8L1501.6 813.1L1502.8 814.8L1504.0 814.8L1505.2 811.4L1506.4 814.8L1507.6 814.8L1508.8 814.8L1510.0 813.1L1511.2 813.1L1512.4 811.4L1513.6 813.1L1514.8 811.4L1516.0 811.4L1517.2 811.4L1518.4 813.1L1519.6 813.1L1520.8 809.6L1522.0 809.6L1523.2 809.6L1524.4 809.6L1525.6 811.4L1526.8 809.6L1528.0 811.4L1529.2 809.6L1530.4 809.6L1531.6 811.4L1532.8 809.6L1534.0 811.4L1535.2 807.9L1536.4 811.4L1537.6 809.6L1538.8 809.6L1540.0 807.9L1541.2 809.6L1542.4 809.6L1543.6 807.9L1544.8 807.9L1546.0 807.9L1547.2 804.5L1548.4 807.9L1549.6 804.5L1550.8 806.2L1552.0 806.2L1553.2 806.2L1554.4 806.2L1555.6 802.7L1556.8 804.5L1558.0 801.0L1559.2 802.7L1560.4 801.0L1561.6 802.7L1562.8 801.0L1564.0 801.0L1565.2 801.0L1566.4 797.5L1567.6 797.5L1568.8 797.5L1570.0 799.3L1571.2 799.3L1572.4 802.7L1573.6 801.0L1574.8 799.3L1576.0 792.3L1577.2 785.4L1578.4 778.5L1579.6 775.0L1580.8 773.3L1582.0 768.1L1583.2 769.9L1584.4 762.9L1585.6 761.2L1586.8 757.7L1588.0 756.0L1589.2 754.3L1590.4 756.0L1591.6 750.8L1592.8 750.8L1594.0 750.8L1595.2 750.8L1596.4 749.1L1597.6 747.4L1598.8 745.6L1600.0 745.6L1601.2 745.6L1602.4 745.6L1603.6 743.9L1604.8 743.9L1606.0 743.9L1607.2 740.4L1608.4 742.2L1609.6 738.7L1610.8 740.4L1612.0 740.4L1613.2 742.2L1614.4 743.9L1615.6 745.6L1616.8 747.4L1618.0 745.6L1619.2 749.1L1620.4 749.1L1621.6 749.1L1622.8 750.8L1624.0 750.8L1625.2 749.1L1626.4 747.4L1627.6 742.2L1628.8 740.4L1630.0 738.7L1631.2 738.7L1632.4 737.0L1633.6 731.8L1634.8 731.8L1636.0 735.2L1637.2 730.1L1638.4 728.3L1639.6 730.1L1640.8 726.6L1642.0 728.3L1643.2 726.6L1644.4 726.6L1645.6 726.6L1646.8 723.1L1648.0 723.1L1649.2 724.9L1650.4 724.9L1651.6 723.1L1652.8 723.1L1654.0 723.1L1655.2 724.9L1656.4 723.1L1657.6 723.1L1658.8 723.1L1660.0 719.7L1661.2 718.0L1662.4 723.1L1663.6 721.4L1664.8 724.9L1666.0 726.6L1667.2 728.3L1668.4 724.9L1669.6 721.4L1670.8 721.4L1672.0 723.1L1673.2 721.4L1674.4 716.2L1675.6 719.7L1676.8 716.2L1678.0 716.2L1679.2 712.8L1680.4 712.8L1681.6 711.0L1682.8 707.6L1684.0 709.3L1685.2 709.3L1686.4 705.8L1687.6 707.6L1688.8 704.1L1690.0 702.4L1691.2 702.4L1692.4 700.6L1693.6 700.6L1694.8 702.4L1696.0 698.9L1697.2 698.9L1698.4 695.5L1699.6 695.5L1700.8 695.5L1702.0 693.7L1703.2 692.0L1704.4 695.5L1705.6 692.0L1706.8 693.7L1708.0 693.7L1709.2 690.3L1710.4 690.3L1711.6 690.3L1712.8 690.3L1714.0 692.0L1715.2 688.5L1716.4 688.5L1717.6 690.3L1718.8 686.8L1720.0 688.5L1721.2 688.5L1722.4 685.1L1723.6 685.1L1724.8 688.5L1726.0 688.5L1727.2 688.5L1728.4 686.8L1729.6 685.1L1730.8 686.8L1732.0 685.1L1733.2 686.8L1734.4 685.1L1735.6 686.8L1736.8 686.8L1738.0 685.1L1739.2 685.1L1740.4 685.1L1741.6 683.4L1742.8 685.1L1744.0 688.5L1745.2 683.4L1746.4 686.8L1747.6 688.5L1748.8 690.3L1750.0 690.3L1751.2 695.5L1752.4 695.5L1753.6 695.5L1754.8 697.2L1756.0 700.6L1757.2 698.9L1758.4 704.1L1759.6 704.1L1760.8 723.1L1762.0 742.2L1763.2 759.5L1764.4 771.6L1765.6 785.4L1766.8 799.3L1768.0 807.9L1769.2 816.6L1770.4 830.4L1771.6 830.4L1772.8 833.9L1774.0 833.9L1775.2 839.0L1776.4 837.3L1777.6 840.8L1778.8 842.5L1780.0 846.0L1781.2 844.2L1782.4 846.0L1783.6 846.0L1784.8 847.7L1786.0 846.0L1787.2 847.7L1788.4 849.4L1789.6 846.0L1790.8 851.2L1792.0 851.2L1793.2 849.4" stroke="#7878f0" stroke-width="1.30" fill="none" stroke-linejoin="round" />
<path d="M136.0 783.4L138.0 782.1L140.0 781.4L142.0 781.8L144.0 780.4L146.0 779.7L148.0 779.7L150.0 778.5L152.0 778.1L154.0 776.4L156.0 776.1L158.0 774.5L160.0 773.7L162.0 773.1L164.0 771.8L166.0 771.0L168.0 769.8L170.0 768.5L172.0 768.7L174.0 767.7L176.0 766.8L178.0 766.0L180.0 766.0L182.0 765.1L184.0 766.2L186.0 766.7L188.0 767.6L190.0 768.0L192.0 768.8L194.0 769.5L196.0 769.8L198.0 771.3L200.0 771.4L202.0 772.6L204.0 773.5L206.0 769.4L208.0 765.1L210.0 764.7L212.0 763.4L214.0 761.8L216.0 760.5L218.0 759.9L220.0 758.2L222.0 758.0L224.0 756.8L226.0 756.3L228.0 755.7L230.0 755.5L232.0 755.3L234.0 754.2L236.0 753.8L238.0 753.6L240.0 752.8L242.0 754.9L244.0 756.7L246.0 755.0L248.0 753.5L250.0 751.7L252.0 752.0L254.0 755.7L256.0 757.9L258.0 758.8L260.0 759.2L262.0 760.1L264.0 760.5L266.0 760.4L268.0 760.7L270.0 760.7L272.0 761.9L274.0 761.6L276.0 762.3L278.0 762.5L280.0 761.3L282.0 759.9L284.0 758.2L286.0 756.6L288.0 755.6L290.0 755.0L292.0 756.0L294.0 756.7L296.0 758.4L298.0 758.9L300.0 760.4L302.0 762.0L304.0 763.3L306.0 764.0L308.0 765.5L310.0 766.3L312.0 767.4L314.0 768.6L316.0 770.1L318.0 771.0L320.0 770.5L322.0 770.2L324.0 769.5L326.0 769.2L328.0 770.6L330.0 771.6L332.0 772.4L334.0 773.7L336.0 773.8L338.0 775.2L340.0 776.8L342.0 778.4L344.0 780.1L346.0 782.5L348.0 784.2L350.0 785.9L352.0 787.6L354.0 791.2L356.0 794.0L358.0 797.2L360.0 800.7L362.0 803.4L364.0 805.9L366.0 807.1L368.0 809.0L370.0 810.7L372.0 813.0L374.0 813.7L376.0 814.9L378.0 816.4L380.0 817.6L382.0 818.5L384.0 818.8L386.0 820.2L388.0 821.7L390.0 821.9L392.0 823.1L394.0 824.4L396.0 825.4L398.0 826.5L400.0 827.1L402.0 827.4L404.0 827.8L406.0 828.3L408.0 828.9L410.0 829.3L412.0 830.7L414.0 831.1L416.0 832.7L418.0 833.4L420.0 833.7L422.0 835.0L424.0 836.0L426.0 836.4L428.0 837.7L430.0 838.2L432.0 839.8L434.0 839.9L436.0 841.3L438.0 842.4L440.0 843.1L442.0 843.2L444.0 844.3L446.0 844.7L448.0 845.7L450.0 847.0L452.0 847.7L454.0 847.4L456.0 848.3L458.0 849.1L460.0 849.2L462.0 850.3L464.0 850.9L466.0 851.1L468.0 851.5L470.0 852.3L472.0 852.1L474.0 852.0L476.0 852.3L478.0 852.4L480.0 853.2L482.0 853.1L484.0 853.5L486.0 853.8L488.0 854.2L490.0 853.7L492.0 854.2L494.0 855.0L496.0 855.1L498.0 855.1L500.0 855.6L502.0 855.5L504.0 855.7L506.0 855.9L508.0 856.5L510.0 856.7L512.0 857.3L514.0 858.0L516.0 857.5L518.0 858.2L520.0 858.9L522.0 858.9L524.0 859.1L526.0 859.7L528.0 859.2L530.0 860.5L532.0 860.5L534.0 860.9L536.0 861.3L538.0 860.8L540.0 861.1L542.0 861.5L544.0 862.1L546.0 862.7L548.0 862.9L550.0 862.6L552.0 863.0L554.0 863.4L556.0 863.2L558.0 864.0L560.0 864.2L562.0 864.2L564.0 864.6L566.0 864.7L568.0 864.7L570.0 864.6L572.0 864.8L574.0 864.9L576.0 864.9L578.0 866.0L580.0 865.6L582.0 865.5L584.0 866.3L586.0 866.6L588.0 867.5L590.0 867.9L592.0 868.3L594.0 869.1L596.0 869.5L598.0 870.0L600.0 871.0L602.0 871.0L604.0 871.7L606.0 872.2L608.0 872.4L610.0 872.0L612.0 871.8L614.0 872.8L616.0 872.5L618.0 872.4L620.0 872.4L622.0 872.7L624.0 872.6L626.0 871.9L628.0 871.4L630.0 871.8L632.0 871.2L634.0 870.0L636.0 869.9L638.0 869.8L640.0 869.0L642.0 866.1L644.0 864.0L646.0 861.6L648.0 859.6L650.0 856.9L652.0 854.3L654.0 851.9L656.0 848.1L658.0 845.5L660.0 842.5L662.0 839.1L664.0 835.6L666.0 832.3L668.0 827.6L670.0 820.4L672.0 813.2L674.0 806.2L676.0 799.1L678.0 790.5L680.0 782.8L682.0 774.9L684.0 770.3L686.0 766.5L688.0 764.1L690.0 761.3L692.0 760.8L694.0 760.4L696.0 760.6L698.0 760.6L700.0 759.7L702.0 759.5L704.0 759.3L706.0 758.7L708.0 758.6L710.0 758.9L712.0 758.2L714.0 758.2L716.0 757.4L718.0 757.7L720.0 757.1L722.0 756.0L724.0 755.9L726.0 755.5L728.0 754.9L730.0 754.4L732.0 753.6L734.0 753.4L736.0 752.7L738.0 752.7L740.0 751.8L742.0 751.9L744.0 751.0L746.0 750.1L748.0 749.8L750.0 749.0L752.0 749.2L754.0 748.0L756.0 748.0L758.0 747.3L760.0 747.6L762.0 747.1L764.0 747.9L766.0 748.1L768.0 747.8L770.0 747.9L772.0 748.4L774.0 748.1L776.0 746.8L778.0 745.5L780.0 744.9L782.0 744.3L784.0 742.7L786.0 742.4L788.0 742.1L790.0 742.3L792.0 742.7L794.0 743.5L796.0 744.1L798.0 744.4L800.0 744.8L802.0 744.7L804.0 743.9L806.0 743.4L808.0 742.8L810.0 742.3L812.0 741.6L814.0 740.6L816.0 739.9L818.0 739.9L820.0 738.5L822.0 738.5L824.0 738.3L826.0 739.0L828.0 738.6L830.0 738.9L832.0 738.5L834.0 738.1L836.0 738.1L838.0 738.3L840.0 738.4L842.0 740.4L844.0 741.5L846.0 742.5L848.0 744.2L850.0 745.9L852.0 745.9L854.0 747.0L856.0 747.4L858.0 747.4L860.0 748.2L862.0 748.4L864.0 748.7L866.0 749.2L868.0 750.9L870.0 751.7L872.0 752.1L874.0 752.9L876.0 753.4L878.0 754.9L880.0 756.0L882.0 756.4L884.0 757.4L886.0 759.1L888.0 760.6L890.0 761.4L892.0 762.9L894.0 764.6L896.0 765.4L898.0 767.5L900.0 768.5L902.0 770.4L904.0 771.5L906.0 772.6L908.0 773.9L910.0 775.5L912.0 777.0L914.0 779.0L916.0 780.5L918.0 782.9L920.0 785.4L922.0 788.5L924.0 791.3L926.0 793.7L928.0 795.8L930.0 797.9L932.0 799.3L934.0 801.0L936.0 802.9L938.0 804.3L940.0 805.8L942.0 805.6L944.0 806.7L946.0 807.0L948.0 806.7L950.0 808.0L952.0 808.4L954.0 808.5L956.0 809.3L958.0 809.4L960.0 809.8L962.0 810.7L964.0 811.7L966.0 813.1L968.0 813.9L970.0 814.0L972.0 815.0L974.0 815.6L976.0 816.6L978.0 817.6L980.0 818.5L982.0 819.1L984.0 820.5L986.0 820.9L988.0 822.5L990.0 822.9L992.0 823.7L994.0 824.8L996.0 825.0L998.0 825.5L1000.0 825.9L1002.0 826.7L1004.0 827.2L1006.0 828.3L1008.0 828.5L1010.0 829.4L1012.0 829.5L1014.0 830.2L1016.0 831.6L1018.0 832.8L1020.0 834.5L1022.0 834.9L1024.0 836.0L1026.0 837.1L1028.0 838.3L1030.0 840.2L1032.0 841.3L1034.0 841.7L1036.0 842.3L1038.0 843.3L1040.0 844.0L1042.0 844.1L1044.0 845.0L1046.0 845.9L1048.0 845.7L1050.0 847.0L1052.0 847.5L1054.0 848.2L1056.0 847.5L1058.0 847.1L1060.0 846.7L1062.0 846.0L1064.0 845.9L1066.0 845.3L1068.0 845.0L1070.0 844.3L1072.0 844.4L1074.0 844.5L1076.0 845.3L1078.0 845.2L1080.0 845.7L1082.0 845.9L1084.0 845.9L1086.0 846.0L1088.0 847.0L1090.0 847.9L1092.0 848.7L1094.0 849.4L1096.0 850.3L1098.0 850.5L1100.0 851.6L1102.0 853.0L1104.0 853.3L1106.0 853.8L1108.0 854.8L1110.0 856.0L1112.0 855.9L1114.0 856.7L1116.0 857.8L1118.0 858.9L1120.0 859.1L1122.0 859.7L1124.0 860.8L1126.0 860.5L1128.0 861.0L1130.0 861.7L1132.0 862.3L1134.0 862.7L1136.0 862.5L1138.0 862.9L1140.0 863.3L1142.0 863.5L1144.0 864.0L1146.0 864.9L1148.0 865.5L1150.0 865.2L1152.0 865.5L1154.0 866.6L1156.0 867.2L1158.0 867.5L1160.0 867.5L1162.0 868.3L1164.0 868.8L1166.0 869.0L1168.0 868.9L1170.0 869.6L1172.0 869.5L1174.0 869.2L1176.0 869.5L1178.0 869.3L1180.0 869.8L1182.0 870.4L1184.0 870.3L1186.0 870.5L1188.0 870.1L1190.0 868.4L1192.0 867.7L1194.0 866.2L1196.0 863.0L1198.0 859.9L1200.0 856.9L1202.0 854.3L1204.0 851.6L1206.0 849.4L1208.0 846.8L1210.0 844.9L1212.0 842.1L1214.0 839.7L1216.0 834.2L1218.0 829.0L1220.0 824.1L1222.0 818.4L1224.0 805.3L1226.0 789.4L1228.0 777.3L1230.0 766.4L1232.0 762.0L1234.0 761.0L1236.0 759.9L1238.0 759.8L1240.0 759.1L1242.0 758.3L1244.0 757.6L1246.0 756.2L1248.0 756.1L1250.0 755.0L1252.0 754.3L1254.0 754.1L1256.0 752.9L1258.0 752.2L1260.0 751.1L1262.0 750.5L1264.0 749.8L1266.0 749.1L1268.0 748.8L1270.0 748.0L1272.0 747.8L1274.0 747.5L1276.0 747.8L1278.0 747.8L1280.0 747.2L1282.0 746.7L1284.0 746.0L1286.0 746.4L1288.0 745.4L1290.0 745.1L1292.0 745.2L1294.0 745.3L1296.0 744.4L1298.0 744.6L1300.0 743.7L1302.0 744.0L1304.0 743.4L1306.0 743.2L1308.0 743.0L1310.0 742.5L1312.0 741.5L1314.0 741.3L1316.0 740.9L1318.0 740.6L1320.0 739.7L1322.0 739.5L1324.0 738.8L1326.0 738.2L1328.0 738.0L1330.0 737.9L1332.0 737.2L1334.0 736.6L1336.0 736.0L1338.0 735.6L1340.0 735.2L1342.0 734.6L1344.0 734.2L1346.0 734.1L1348.0 734.1L1350.0 734.5L1352.0 734.4L1354.0 734.3L1356.0 734.6L1358.0 734.3L1360.0 733.7L1362.0 733.9L1364.0 734.0L1366.0 734.2L1368.0 733.9L1370.0 733.6L1372.0 734.2L1374.0 734.6L1376.0 734.9L1378.0 734.8L1380.0 734.7L1382.0 734.8L1384.0 735.4L1386.0 735.9L1388.0 735.4L1390.0 736.0L1392.0 736.3L1394.0 736.5L1396.0 736.4L1398.0 736.7L1400.0 737.1L1402.0 737.9L1404.0 739.0L1406.0 739.0L1408.0 740.1L1410.0 740.4L1412.0 740.7L1414.0 741.0L1416.0 741.6L1418.0 742.5L1420.0 743.0L1422.0 743.8L1424.0 745.6L1426.0 746.3L1428.0 747.1L1430.0 748.1L1432.0 748.8L1434.0 750.3L1436.0 751.5L1438.0 752.2L1440.0 753.5L1442.0 755.0L1444.0 756.0L1446.0 757.7L1448.0 759.5L1450.0 760.6L1452.0 761.5L1454.0 763.4L1456.0 764.8L1458.0 766.4L1460.0 767.1L1462.0 767.6L1464.0 768.0L1466.0 767.5L1468.0 768.1L1470.0 767.9L1472.0 769.2L1474.0 768.6L1476.0 769.2L1478.0 769.7L1480.0 769.8L1482.0 770.0L1484.0 770.8L1486.0 770.9L1488.0 771.6L1490.0 772.3L1492.0 772.3L1494.0 772.9L1496.0 773.6L1498.0 773.9L1500.0 774.6L1502.0 775.2L1504.0 775.9L1506.0 775.9L1508.0 777.0L1510.0 777.4L1512.0 778.7L1514.0 779.2L1516.0 780.4L1518.0 780.8L1520.0 781.2L1522.0 779.7L1524.0 779.7L1526.0 778.8L1528.0 778.6L1530.0 777.2L1532.0 777.4L1534.0 778.1L1536.0 777.9L1538.0 778.2L1540.0 778.4L1542.0 779.1L1544.0 778.9L1546.0 779.3L1548.0 780.2L1550.0 781.2L1552.0 781.8L1554.0 782.6L1556.0 783.8L1558.0 785.2L1560.0 786.2L1562.0 786.5L1564.0 787.7L1566.0 788.3L1568.0 788.3L1570.0 789.7L1572.0 793.8L1574.0 799.7L1576.0 806.6L1578.0 810.0L1580.0 812.3L1582.0 814.8L1584.0 816.9L1586.0 819.5L1588.0 822.0L1590.0 822.1L1592.0 822.9L1594.0 823.6L1596.0 823.9L1598.0 824.7L1600.0 825.4L1602.0 826.4L1604.0 827.0L1606.0 827.0L1608.0 827.0L1610.0 826.7L1612.0 826.3L1614.0 825.4L1616.0 825.0L1618.0 824.4L1620.0 825.1L1622.0 826.7L1624.0 828.1L1626.0 829.5L1628.0 829.9L1630.0 831.9L1632.0 832.6L1634.0 833.2L1636.0 833.7L1638.0 835.3L1640.0 836.0L1642.0 836.4L1644.0 837.1L1646.0 837.5L1648.0 838.8L1650.0 838.9L1652.0 838.6L1654.0 839.3L1656.0 839.9L1658.0 839.5L1660.0 839.9L1662.0 840.1L1664.0 840.5L1666.0 841.6L1668.0 843.5L1670.0 844.5L1672.0 846.4L1674.0 847.5L1676.0 849.3L1678.0 850.4L1680.0 851.0L1682.0 850.9L1684.0 852.1L1686.0 852.6L1688.0 852.7L1690.0 852.9L1692.0 853.6L1694.0 854.8L1696.0 855.5L1698.0 855.2L1700.0 855.9L1702.0 856.6L1704.0 856.8L1706.0 857.8L1708.0 858.4L1710.0 858.7L1712.0 858.3L1714.0 859.4L1716.0 859.6L1718.0 859.3L1720.0 860.3L1722.0 860.7L1724.0 861.0L1726.0 861.2L1728.0 861.5L1730.0 861.6L1732.0 861.4L1734.0 862.4L1736.0 862.6L1738.0 862.7L1740.0 863.1L1742.0 864.2L1744.0 864.6L1746.0 864.0L1748.0 861.5L1750.0 859.7L1752.0 856.7L1754.0 854.8L1756.0 851.9L1758.0 849.6L1760.0 843.2L1762.0 825.2L1764.0 805.9L1766.0 792.6L1768.0 784.3L1770.0 775.8L1772.0 767.3L1774.0 761.6L1776.0 758.7L1778.0 756.3L1780.0 753.8L1782.0 752.0L1784.0 749.0L1786.0 748.9L1788.0 748.4L1790.0 747.1L1792.0 747.3L1794.0 747.0" stroke="#10d010" stroke-width="1.50" fill="none" stroke-linejoin="round" />
<path d="M136.0 878.9L137.2 879.4L138.4 879.7L139.6 877.0L140.8 879.5L142.0 879.4L143.2 880.4L144.4 879.3L145.6 880.1L146.8 881.6L148.0 881.3L149.2 882.7L150.4 881.6L151.6 882.3L152.8 885.2L154.0 884.4L155.2 885.1L156.4 886.3L157.6 885.2L158.8 884.3L160.0 887.6L161.2 887.1L162.4 887.8L163.6 888.0L164.8 889.7L166.0 887.6L167.2 889.6L168.4 888.3L169.6 889.5L170.8 890.2L172.0 890.3L173.2 891.0L174.4 894.1L175.6 894.9L176.8 892.6L178.0 890.1L179.2 889.0L180.4 885.3L181.6 883.5L182.8 882.2L184.0 882.3L185.2 877.9L186.4 875.7L187.6 873.8L188.8 871.7L190.0 870.8L191.2 871.2L192.4 871.4L193.6 868.6L194.8 867.9L196.0 866.8L197.2 866.0L198.4 867.1L199.6 866.4L200.8 865.5L202.0 865.1L203.2 868.0L204.4 867.9L205.6 868.6L206.8 866.5L208.0 868.9L209.2 871.4L210.4 871.2L211.6 873.7L212.8 871.7L214.0 876.0L215.2 873.4L216.4 876.0L217.6 875.5L218.8 879.7L220.0 880.3L221.2 880.3L222.4 876.9L223.6 874.7L224.8 870.4L226.0 869.5L227.2 868.3L228.4 866.5L229.6 868.9L230.8 866.3L232.0 865.4L233.2 864.8L234.4 866.2L235.6 864.9L236.8 867.7L238.0 867.6L239.2 864.5L240.4 863.9L241.6 865.4L242.8 863.8L244.0 865.2L245.2 866.1L246.4 864.3L247.6 865.4L248.8 867.8L250.0 866.5L251.2 866.5L252.4 869.2L253.6 869.4L254.8 870.2L256.0 869.8L257.2 869.2L258.4 870.8L259.6 871.5L260.8 870.4L262.0 868.5L263.2 868.4L264.4 868.6L265.6 869.7L266.8 868.6L268.0 868.3L269.2 869.1L270.4 865.9L271.6 867.7L272.8 866.2L274.0 866.8L275.2 867.6L276.4 865.0L277.6 867.5L278.8 863.7L280.0 865.3L281.2 864.9L282.4 863.4L283.6 864.4L284.8 863.8L286.0 863.4L287.2 864.5L288.4 862.1L289.6 864.0L290.8 866.1L292.0 864.0L293.2 867.3L294.4 865.1L295.6 867.5L296.8 865.9L298.0 867.4L299.2 867.8L300.4 866.9L301.6 869.8L302.8 869.4L304.0 870.7L305.2 870.5L306.4 871.0L307.6 871.4L308.8 870.9L310.0 872.9L311.2 869.3L312.4 872.1L313.6 871.7L314.8 869.9L316.0 870.7L317.2 869.9L318.4 869.3L319.6 867.7L320.8 867.4L322.0 867.2L323.2 866.6L324.4 868.9L325.6 866.1L326.8 865.9L328.0 865.7L329.2 867.5L330.4 866.4L331.6 867.0L332.8 866.1L334.0 866.4L335.2 866.0L336.4 866.7L337.6 867.2L338.8 869.8L340.0 868.7L341.2 867.4L342.4 869.0L343.6 867.9L344.8 870.0L346.0 869.8L347.2 871.7L348.4 870.3L349.6 873.9L350.8 872.7L352.0 876.8L353.2 876.6L354.4 875.5L355.6 879.7L356.8 877.8L358.0 878.3L359.2 877.5L360.4 880.4L361.6 877.5L362.8 880.2L364.0 879.0L365.2 880.2L366.4 878.8L367.6 878.1L368.8 881.5L370.0 880.6L371.2 878.8L372.4 882.1L373.6 882.0L374.8 879.2L376.0 878.7L377.2 881.1L378.4 879.4L379.6 881.9L380.8 880.9L382.0 882.0L383.2 881.6L384.4 882.4L385.6 882.6L386.8 881.7L388.0 881.7L389.2 880.6L390.4 879.8L391.6 879.7L392.8 882.7L394.0 880.1L395.2 881.0L396.4 880.6L397.6 881.8L398.8 881.4L400.0 882.7L401.2 881.0L402.4 880.7L403.6 881.9L404.8 882.3L406.0 883.0L407.2 880.5L408.4 882.8L409.6 883.2L410.8 883.2L412.0 880.0L413.2 881.2L414.4 882.9L415.6 883.3L416.8 880.4L418.0 882.0L419.2 883.5L420.4 883.8L421.6 883.1L422.8 882.0L424.0 882.9L425.2 881.7L426.4 882.9L427.6 883.6L428.8 885.3L430.0 884.6L431.2 884.1L432.4 883.6L433.6 884.0L434.8 885.6L436.0 884.9L437.2 884.0L438.4 886.8L439.6 886.0L440.8 887.7L442.0 886.2L443.2 886.7L444.4 886.1L445.6 887.0L446.8 888.4L448.0 888.9L449.2 887.7L450.4 887.0L451.6 885.7L452.8 889.0L454.0 887.4L455.2 887.5L456.4 886.4L457.6 886.5L458.8 888.1L460.0 890.6L461.2 889.8L462.4 889.9L463.6 889.9L464.8 888.5L466.0 888.3L467.2 890.1L468.4 888.0L469.6 890.1L470.8 889.9L472.0 890.1L473.2 888.5L474.4 888.3L475.6 890.0L476.8 888.7L478.0 890.8L479.2 889.5L480.4 890.8L481.6 891.4L482.8 890.9L484.0 890.6L485.2 889.4L486.4 890.0L487.6 892.6L488.8 889.8L490.0 890.0L491.2 890.9L492.4 891.1L493.6 892.2L494.8 890.3L496.0 893.1L497.2 889.4L498.4 892.6L499.6 891.9L500.8 893.3L502.0 890.4L503.2 892.7L504.4 893.8L505.6 892.8L506.8 890.7L508.0 894.1L509.2 894.4L510.4 891.1L511.6 894.1L512.8 891.2L514.0 891.3L515.2 894.3L516.4 894.1L517.6 895.2L518.8 894.0L520.0 893.6L521.2 892.8L522.4 893.9L523.6 895.5L524.8 894.1L526.0 895.0L527.2 892.2L528.4 894.3L529.6 894.2L530.8 891.5L532.0 894.4L533.2 891.8L534.4 891.9L535.6 891.2L536.8 893.6L538.0 891.4L539.2 894.7L540.4 890.7L541.6 893.9L542.8 893.6L544.0 892.8L545.2 892.8L546.4 893.6L547.6 892.9L548.8 890.9L550.0 893.5L551.2 891.8L552.4 892.8L553.6 892.6L554.8 894.2L556.0 892.3L557.2 894.1L558.4 891.1L559.6 892.2L560.8 893.6L562.0 893.4L563.2 894.4L564.4 891.9L565.6 894.4L566.8 894.4L568.0 891.8L569.2 891.9L570.4 893.7L571.6 895.4L572.8 894.0L574.0 893.3L575.2 893.7L576.4 894.9L577.6 893.9L578.8 894.1L580.0 894.5L581.2 896.0L582.4 895.6L583.6 895.9L584.8 893.8L586.0 895.2L587.2 896.3L588.4 896.0L589.6 897.1L590.8 897.1L592.0 894.1L593.2 895.7L594.4 895.3L595.6 894.8L596.8 896.1L598.0 898.2L599.2 897.5L600.4 895.0L601.6 895.7L602.8 896.3L604.0 898.5L605.2 896.8L606.4 895.6L607.6 897.1L608.8 895.9L610.0 895.0L611.2 897.2L612.4 898.8L613.6 897.9L614.8 897.7L616.0 895.4L617.2 897.0L618.4 897.3L619.6 897.8L620.8 896.5L622.0 894.9L623.2 898.4L624.4 895.7L625.6 897.6L626.8 896.4L628.0 897.7L629.2 895.9L630.4 894.9L631.6 896.2L632.8 896.0L634.0 896.8L635.2 894.8L636.4 895.5L637.6 893.9L638.8 894.9L640.0 892.2L641.2 894.6L642.4 894.4L643.6 890.3L644.8 893.2L646.0 892.5L647.2 891.7L648.4 888.9L649.6 891.0L650.8 890.8L652.0 889.9L653.2 890.9L654.4 890.5L655.6 889.0L656.8 889.9L658.0 886.4L659.2 886.7L660.4 887.4L661.6 887.0L662.8 888.5L664.0 886.9L665.2 886.5L666.4 886.2L667.6 886.9L668.8 882.1L670.0 880.9L671.2 877.8L672.4 874.4L673.6 871.6L674.8 868.3L676.0 865.2L677.2 863.9L678.4 861.2L679.6 860.0L680.8 861.3L682.0 860.5L683.2 862.5L684.4 861.6L685.6 860.8L686.8 861.2L688.0 858.6L689.2 857.7L690.4 859.4L691.6 857.8L692.8 860.7L694.0 858.4L695.2 860.1L696.4 857.4L697.6 856.7L698.8 858.8L700.0 858.9L701.2 857.1L702.4 859.7L703.6 859.8L704.8 858.5L706.0 859.6L707.2 859.5L708.4 856.1L709.6 858.3L710.8 858.3L712.0 858.1L713.2 856.4L714.4 857.1L715.6 857.2L716.8 858.2L718.0 854.9L719.2 856.1L720.4 855.8L721.6 857.6L722.8 854.8L724.0 854.5L725.2 854.6L726.4 854.6L727.6 855.7L728.8 857.4L730.0 855.3L731.2 854.2L732.4 856.4L733.6 854.9L734.8 855.8L736.0 856.4L737.2 855.2L738.4 856.2L739.6 855.7L740.8 856.5L742.0 856.1L743.2 856.5L744.4 855.8L745.6 853.9L746.8 854.6L748.0 855.5L749.2 855.4L750.4 855.1L751.6 855.4L752.8 855.2L754.0 853.9L755.2 854.2L756.4 851.6L757.6 853.2L758.8 854.1L760.0 854.7L761.2 854.3L762.4 852.5L763.6 851.5L764.8 854.0L766.0 853.0L767.2 851.0L768.4 850.2L769.6 853.4L770.8 852.1L772.0 850.1L773.2 853.5L774.4 851.7L775.6 852.3L776.8 852.3L778.0 850.0L779.2 850.9L780.4 849.4L781.6 851.2L782.8 850.6L784.0 852.3L785.2 849.8L786.4 850.3L787.6 851.3L788.8 849.9L790.0 851.7L791.2 854.2L792.4 854.0L793.6 851.4L794.8 854.3L796.0 852.0L797.2 852.3L798.4 854.1L799.6 852.9L800.8 852.7L802.0 852.5L803.2 853.1L804.4 853.3L805.6 856.4L806.8 853.1L808.0 855.2L809.2 854.1L810.4 856.3L811.6 853.5L812.8 855.2L814.0 856.8L815.2 854.1L816.4 855.8L817.6 855.6L818.8 856.4L820.0 857.1L821.2 855.1L822.4 858.4L823.6 856.1L824.8 858.3L826.0 855.9L827.2 855.9L828.4 856.4L829.6 856.1L830.8 857.0L832.0 856.7L833.2 856.6L834.4 859.8L835.6 858.7L836.8 858.7L838.0 858.9L839.2 860.3L840.4 857.7L841.6 858.1L842.8 861.0L844.0 858.8L845.2 861.3L846.4 862.2L847.6 863.5L848.8 860.6L850.0 862.6L851.2 862.3L852.4 863.4L853.6 861.2L854.8 864.1L856.0 865.0L857.2 863.4L858.4 863.9L859.6 864.6L860.8 864.7L862.0 864.6L863.2 863.3L864.4 861.7L865.6 864.6L866.8 864.8L868.0 864.3L869.2 862.8L870.4 865.5L871.6 864.1L872.8 862.9L874.0 864.8L875.2 862.6L876.4 862.7L877.6 865.4L878.8 862.0L880.0 865.3L881.2 863.4L882.4 864.2L883.6 864.6L884.8 865.4L886.0 862.6L887.2 862.0L888.4 863.6L889.6 862.4L890.8 863.1L892.0 861.8L893.2 861.6L894.4 863.5L895.6 861.3L896.8 862.1L898.0 862.5L899.2 861.3L900.4 864.1L901.6 864.4L902.8 860.8L904.0 863.8L905.2 861.2L906.4 863.4L907.6 860.6L908.8 863.3L910.0 864.0L911.2 861.6L912.4 862.3L913.6 864.0L914.8 867.0L916.0 867.7L917.2 866.2L918.4 870.2L919.6 870.5L920.8 872.4L922.0 873.2L923.2 869.9L924.4 872.2L925.6 869.4L926.8 870.1L928.0 871.4L929.2 870.2L930.4 870.2L931.6 870.7L932.8 871.1L934.0 873.0L935.2 871.6L936.4 871.5L937.6 872.2L938.8 870.0L940.0 872.3L941.2 872.0L942.4 872.0L943.6 870.4L944.8 870.6L946.0 868.6L947.2 870.0L948.4 870.6L949.6 871.6L950.8 871.3L952.0 868.9L953.2 870.4L954.4 870.6L955.6 870.9L956.8 869.6L958.0 868.0L959.2 870.1L960.4 866.5L961.6 868.5L962.8 867.9L964.0 869.5L965.2 868.3L966.4 866.5L967.6 866.5L968.8 866.1L970.0 869.1L971.2 869.3L972.4 867.7L973.6 867.2L974.8 868.7L976.0 867.3L977.2 868.8L978.4 868.1L979.6 868.1L980.8 869.7L982.0 868.0L983.2 868.5L984.4 869.5L985.6 871.1L986.8 868.0L988.0 868.8L989.2 868.7L990.4 869.0L991.6 869.8L992.8 871.2L994.0 868.8L995.2 871.1L996.4 870.0L997.6 870.7L998.8 870.5L1000.0 871.1L1001.2 869.5L1002.4 871.3L1003.6 870.6L1004.8 872.3L1006.0 871.6L1007.2 871.0L1008.4 873.4L1009.6 870.3L1010.8 869.8L1012.0 870.3L1013.2 872.7L1014.4 870.4L1015.6 873.1L1016.8 870.6L1018.0 871.6L1019.2 873.0L1020.4 870.7L1021.6 872.5L1022.8 875.0L1024.0 874.1L1025.2 872.9L1026.4 875.1L1027.6 874.0L1028.8 875.1L1030.0 873.4L1031.2 873.7L1032.4 875.2L1033.6 875.6L1034.8 875.5L1036.0 873.5L1037.2 874.8L1038.4 874.6L1039.6 874.4L1040.8 874.1L1042.0 876.8L1043.2 874.6L1044.4 875.6L1045.6 874.4L1046.8 877.4L1048.0 877.2L1049.2 874.9L1050.4 878.0L1051.6 877.8L1052.8 876.4L1054.0 876.2L1055.2 875.4L1056.4 872.3L1057.6 872.9L1058.8 872.3L1060.0 871.1L1061.2 873.1L1062.4 872.5L1063.6 871.2L1064.8 872.4L1066.0 870.1L1067.2 870.2L1068.4 869.4L1069.6 869.7L1070.8 872.0L1072.0 870.5L1073.2 871.3L1074.4 871.7L1075.6 870.8L1076.8 869.4L1078.0 871.7L1079.2 868.0L1080.4 869.2L1081.6 871.0L1082.8 870.6L1084.0 869.8L1085.2 872.3L1086.4 872.5L1087.6 872.9L1088.8 871.6L1090.0 873.8L1091.2 874.2L1092.4 875.5L1093.6 874.7L1094.8 876.9L1096.0 876.2L1097.2 873.8L1098.4 874.8L1099.6 872.9L1100.8 874.2L1102.0 872.6L1103.2 874.9L1104.4 872.4L1105.6 874.9L1106.8 875.8L1108.0 874.7L1109.2 876.3L1110.4 875.6L1111.6 876.9L1112.8 877.9L1114.0 879.7L1115.2 879.6L1116.4 878.9L1117.6 881.6L1118.8 881.1L1120.0 881.1L1121.2 880.8L1122.4 882.5L1123.6 881.6L1124.8 881.6L1126.0 881.0L1127.2 880.6L1128.4 880.7L1129.6 881.7L1130.8 880.8L1132.0 879.3L1133.2 879.9L1134.4 879.2L1135.6 879.2L1136.8 880.4L1138.0 880.5L1139.2 880.8L1140.4 879.8L1141.6 879.9L1142.8 880.8L1144.0 880.2L1145.2 880.1L1146.4 881.3L1147.6 882.7L1148.8 880.2L1150.0 880.3L1151.2 882.4L1152.4 884.5L1153.6 883.7L1154.8 883.0L1156.0 885.7L1157.2 884.8L1158.4 885.7L1159.6 886.1L1160.8 883.2L1162.0 884.1L1163.2 886.8L1164.4 885.5L1165.6 887.6L1166.8 884.2L1168.0 887.6L1169.2 886.3L1170.4 885.4L1171.6 887.1L1172.8 885.8L1174.0 885.5L1175.2 884.3L1176.4 886.7L1177.6 884.1L1178.8 884.7L1180.0 883.8L1181.2 883.5L1182.4 884.5L1183.6 883.5L1184.8 885.1L1186.0 884.6L1187.2 883.2L1188.4 885.0L1189.6 884.2L1190.8 884.0L1192.0 885.2L1193.2 882.7L1194.4 880.0L1195.6 882.0L1196.8 880.5L1198.0 876.0L1199.2 876.1L1200.4 874.3L1201.6 872.2L1202.8 872.7L1204.0 870.8L1205.2 870.2L1206.4 870.2L1207.6 867.8L1208.8 867.8L1210.0 870.1L1211.2 868.6L1212.4 866.1L1213.6 868.0L1214.8 863.9L1216.0 864.1L1217.2 860.1L1218.4 860.6L1219.6 856.9L1220.8 856.7L1222.0 851.9L1223.2 851.1L1224.4 850.4L1225.6 853.0L1226.8 854.2L1228.0 852.1L1229.2 854.1L1230.4 854.0L1231.6 854.4L1232.8 855.5L1234.0 855.9L1235.2 857.0L1236.4 857.7L1237.6 859.8L1238.8 859.0L1240.0 859.6L1241.2 858.1L1242.4 858.2L1243.6 858.8L1244.8 858.3L1246.0 857.6L1247.2 858.8L1248.4 861.6L1249.6 858.3L1250.8 860.3L1252.0 859.4L1253.2 861.8L1254.4 859.1L1255.6 861.1L1256.8 862.1L1258.0 861.2L1259.2 860.1L1260.4 863.2L1261.6 859.8L1262.8 863.6L1264.0 863.3L1265.2 863.7L1266.4 863.8L1267.6 862.0L1268.8 863.5L1270.0 863.3L1271.2 864.2L1272.4 863.8L1273.6 866.2L1274.8 864.4L1276.0 865.9L1277.2 864.4L1278.4 864.7L1279.6 868.2L1280.8 866.2L1282.0 866.3L1283.2 868.9L1284.4 868.0L1285.6 865.8L1286.8 867.5L1288.0 867.3L1289.2 867.9L1290.4 866.7L1291.6 866.9L1292.8 869.6L1294.0 868.4L1295.2 868.3L1296.4 869.0L1297.6 869.3L1298.8 867.1L1300.0 869.7L1301.2 868.6L1302.4 867.4L1303.6 868.1L1304.8 870.9L1306.0 870.5L1307.2 870.8L1308.4 869.3L1309.6 870.0L1310.8 869.1L1312.0 870.6L1313.2 869.9L1314.4 869.3L1315.6 871.9L1316.8 870.1L1318.0 868.4L1319.2 871.6L1320.4 868.8L1321.6 869.7L1322.8 870.5L1324.0 869.7L1325.2 870.7L1326.4 870.8L1327.6 871.3L1328.8 871.9L1330.0 872.2L1331.2 869.7L1332.4 870.6L1333.6 870.3L1334.8 871.2L1336.0 871.7L1337.2 873.0L1338.4 869.2L1339.6 872.1L1340.8 869.1L1342.0 871.1L1343.2 871.1L1344.4 871.3L1345.6 869.3L1346.8 866.9L1348.0 867.5L1349.2 867.7L1350.4 868.6L1351.6 869.9L1352.8 869.5L1354.0 866.3L1355.2 866.6L1356.4 868.8L1357.6 867.0L1358.8 868.6L1360.0 868.3L1361.2 868.5L1362.4 867.8L1363.6 870.1L1364.8 867.7L1366.0 868.0L1367.2 867.2L1368.4 867.8L1369.6 867.2L1370.8 869.3L1372.0 866.9L1373.2 867.8L1374.4 870.1L1375.6 870.3L1376.8 868.3L1378.0 869.9L1379.2 870.3L1380.4 869.7L1381.6 869.6L1382.8 870.2L1384.0 868.5L1385.2 868.6L1386.4 868.3L1387.6 868.3L1388.8 869.5L1390.0 869.6L1391.2 868.3L1392.4 867.9L1393.6 867.7L1394.8 868.5L1396.0 868.3L1397.2 870.2L1398.4 871.0L1399.6 870.0L1400.8 870.5L1402.0 869.6L1403.2 868.3L1404.4 871.0L1405.6 871.2L1406.8 868.8L1408.0 869.5L1409.2 871.0L1410.4 871.2L1411.6 869.1L1412.8 870.1L1414.0 870.1L1415.2 870.9L1416.4 872.0L1417.6 869.4L1418.8 870.4L1420.0 872.7L1421.2 869.7L1422.4 869.8L1423.6 872.3L1424.8 871.7L1426.0 871.2L1427.2 871.2L1428.4 869.7L1429.6 872.1L1430.8 870.7L1432.0 871.5L1433.2 873.5L1434.4 871.8L1435.6 871.5L1436.8 871.4L1438.0 871.2L1439.2 872.6L1440.4 873.1L1441.6 870.7L1442.8 870.4L1444.0 872.0L1445.2 871.1L1446.4 872.9L1447.6 871.3L1448.8 872.7L1450.0 872.7L1451.2 874.7L1452.4 872.2L1453.6 872.0L1454.8 872.4L1456.0 873.8L1457.2 872.2L1458.4 872.2L1459.6 874.2L1460.8 873.5L1462.0 871.7L1463.2 874.9L1464.4 872.1L1465.6 872.8L1466.8 873.9L1468.0 873.6L1469.2 874.9L1470.4 872.5L1471.6 874.6L1472.8 872.7L1474.0 872.5L1475.2 874.9L1476.4 875.3L1477.6 872.7L1478.8 872.4L1480.0 873.2L1481.2 874.7L1482.4 872.6L1483.6 876.3L1484.8 872.7L1486.0 875.6L1487.2 875.9L1488.4 874.3L1489.6 876.1L1490.8 873.6L1492.0 876.0L1493.2 875.3L1494.4 876.5L1495.6 876.3L1496.8 876.3L1498.0 876.7L1499.2 874.3L1500.4 873.5L1501.6 874.1L1502.8 876.5L1504.0 875.6L1505.2 875.6L1506.4 875.5L1507.6 873.8L1508.8 877.5L1510.0 876.1L1511.2 876.2L1512.4 875.9L1513.6 877.5L1514.8 875.6L1516.0 875.5L1517.2 876.3L1518.4 873.4L1519.6 875.8L1520.8 874.8L1522.0 873.3L1523.2 872.3L1524.4 873.5L1525.6 872.3L1526.8 870.9L1528.0 874.1L1529.2 873.9L1530.4 874.5L1531.6 874.0L1532.8 872.6L1534.0 874.6L1535.2 872.0L1536.4 872.1L1537.6 873.0L1538.8 873.8L1540.0 871.5L1541.2 871.4L1542.4 874.9L1543.6 871.3L1544.8 874.2L1546.0 873.2L1547.2 875.2L1548.4 874.8L1549.6 873.3L1550.8 873.6L1552.0 874.3L1553.2 872.5L1554.4 871.6L1555.6 875.5L1556.8 873.8L1558.0 874.8L1559.2 873.8L1560.4 872.0L1561.6 872.1L1562.8 872.7L1564.0 875.7L1565.2 875.1L1566.4 873.0L1567.6 873.7L1568.8 877.3L1570.0 877.6L1571.2 879.1L1572.4 882.2L1573.6 883.0L1574.8 884.4L1576.0 882.3L1577.2 884.0L1578.4 882.2L1579.6 881.8L1580.8 884.5L1582.0 883.3L1583.2 881.8L1584.4 882.6L1585.6 884.5L1586.8 882.2L1588.0 881.7L1589.2 882.4L1590.4 883.9L1591.6 882.7L1592.8 882.0L1594.0 882.4L1595.2 881.2L1596.4 883.4L1597.6 880.6L1598.8 880.3L1600.0 881.2L1601.2 882.3L1602.4 882.1L1603.6 881.5L1604.8 878.7L1606.0 881.7L1607.2 882.1L1608.4 878.8L1609.6 878.9L1610.8 878.9L1612.0 878.4L1613.2 878.4L1614.4 879.7L1615.6 880.3L1616.8 879.3L1618.0 879.4L1619.2 879.9L1620.4 880.3L1621.6 880.8L1622.8 879.6L1624.0 878.9L1625.2 877.3L1626.4 878.3L1627.6 878.1L1628.8 881.3L1630.0 880.4L1631.2 878.2L1632.4 879.1L1633.6 879.6L1634.8 880.5L1636.0 882.0L1637.2 879.6L1638.4 881.2L1639.6 880.2L1640.8 882.3L1642.0 880.8L1643.2 882.0L1644.4 881.3L1645.6 882.0L1646.8 882.3L1648.0 880.9L1649.2 881.3L1650.4 882.1L1651.6 882.6L1652.8 882.2L1654.0 881.4L1655.2 882.1L1656.4 882.3L1657.6 881.9L1658.8 881.8L1660.0 880.9L1661.2 881.0L1662.4 881.5L1663.6 881.3L1664.8 882.9L1666.0 885.7L1667.2 883.9L1668.4 886.5L1669.6 886.0L1670.8 887.5L1672.0 886.8L1673.2 888.5L1674.4 888.4L1675.6 886.0L1676.8 886.1L1678.0 890.2L1679.2 887.8L1680.4 889.0L1681.6 890.2L1682.8 890.3L1684.0 888.5L1685.2 887.7L1686.4 888.8L1687.6 889.2L1688.8 886.8L1690.0 889.6L1691.2 886.4L1692.4 888.0L1693.6 889.8L1694.8 889.9L1696.0 889.8L1697.2 889.9L1698.4 888.2L1699.6 888.1L1700.8 888.3L1702.0 888.5L1703.2 887.3L1704.4 887.9L1705.6 888.3L1706.8 886.5L1708.0 888.7L1709.2 886.7L1710.4 888.6L1711.6 886.6L1712.8 887.1L1714.0 888.2L1715.2 889.4L1716.4 890.4L1717.6 889.5L1718.8 889.7L1720.0 888.4L1721.2 888.9L1722.4 889.2L1723.6 891.1L1724.8 890.8L1726.0 887.7L1727.2 890.6L1728.4 890.9L1729.6 891.8L1730.8 892.2L1732.0 890.2L1733.2 890.5L1734.4 890.0L1735.6 890.0L1736.8 893.0L1738.0 892.6L1739.2 893.2L1740.4 891.3L1741.6 893.3L1742.8 890.5L1744.0 892.0L1745.2 890.5L1746.4 889.8L1747.6 891.8L1748.8 887.1L1750.0 890.2L1751.2 888.3L1752.4 888.9L1753.6 885.9L1754.8 887.1L1756.0 885.0L1757.2 883.7L1758.4 881.2L1759.6 877.1L1760.8 875.8L1762.0 871.4L1763.2 870.5L1764.4 873.7L1765.6 871.3L1766.8 875.3L1768.0 873.0L1769.2 876.2L1770.4 874.2L1771.6 876.3L1772.8 875.2L1774.0 876.8L1775.2 874.9L1776.4 875.1L1777.6 875.4L1778.8 878.3L1780.0 878.1L1781.2 876.1L1782.4 878.5L1783.6 878.4L1784.8 875.4L1786.0 877.3L1787.2 875.8L1788.4 876.4L1789.6 876.3L1790.8 876.1L1792.0 877.6L1793.2 876.2" stroke="#e010e0" stroke-width="1.30" fill="none" stroke-linejoin="round" />
<clipPath id="tc"><rect x="0" y="0" width="2048" height="18"/></clipPath><g clip-path="url(#tc)">
<text x="144.8" y="16.6" fill="#ffffff" font-size="19.6" textLength="153.0" lengthAdjust="spacingAndGlyphs">Windspeed (mph)</text>
<text x="736.4" y="16.6" fill="#ffff00" font-size="19.6" textLength="306.5" lengthAdjust="spacingAndGlyphs">Current last 72 hours October 7 2025</text>
<text x="1589.0" y="16.8" fill="#ff00ff" font-size="19.6" textLength="124.0" lengthAdjust="spacingAndGlyphs">Barometer (.in)</text>
</g>
<clipPath id="rc"><rect x="3.5" y="560" width="200" height="40"/></clipPath><g clip-path="url(#rc)">
<text x="-4.5" y="587.5" fill="#ff2020" font-size="19.6" textLength="102.0" lengthAdjust="spacingAndGlyphs">Rainfall (.in)</text>
</g>
<text x="282.7" y="587.5" fill="#8080ff" font-size="19.6" textLength="74.0" lengthAdjust="spacingAndGlyphs">Humidity</text>
<text x="509.4" y="575.0" fill="#c81e4a" font-size="19.6" textLength="101.5" lengthAdjust="spacingAndGlyphs">Indoor temp</text>
<text x="1335.6" y="588.0" fill="#00f000" font-size="19.6" textLength="145.5" lengthAdjust="spacingAndGlyphs">Temperature (°F)</text>
<text x="1686.4" y="588.0" fill="#ff00ff" font-size="19.6" textLength="120.5" lengthAdjust="spacingAndGlyphs">Dew Point (°F)</text>
<text x="1870.3" y="442" fill="#ffff00" font-size="20" text-anchor="middle">N</text>
<text x="1870.3" y="472" fill="#ffff00" font-size="20" text-anchor="middle">W</text>
<text x="1870.3" y="503" fill="#ffff00" font-size="20" text-anchor="middle">S</text>
<text x="1870.3" y="531" fill="#ffff00" font-size="20" text-anchor="middle">E</text>
<text x="1870.3" y="559" fill="#ffff00" font-size="20" text-anchor="middle">N</text></svg></body></html>
